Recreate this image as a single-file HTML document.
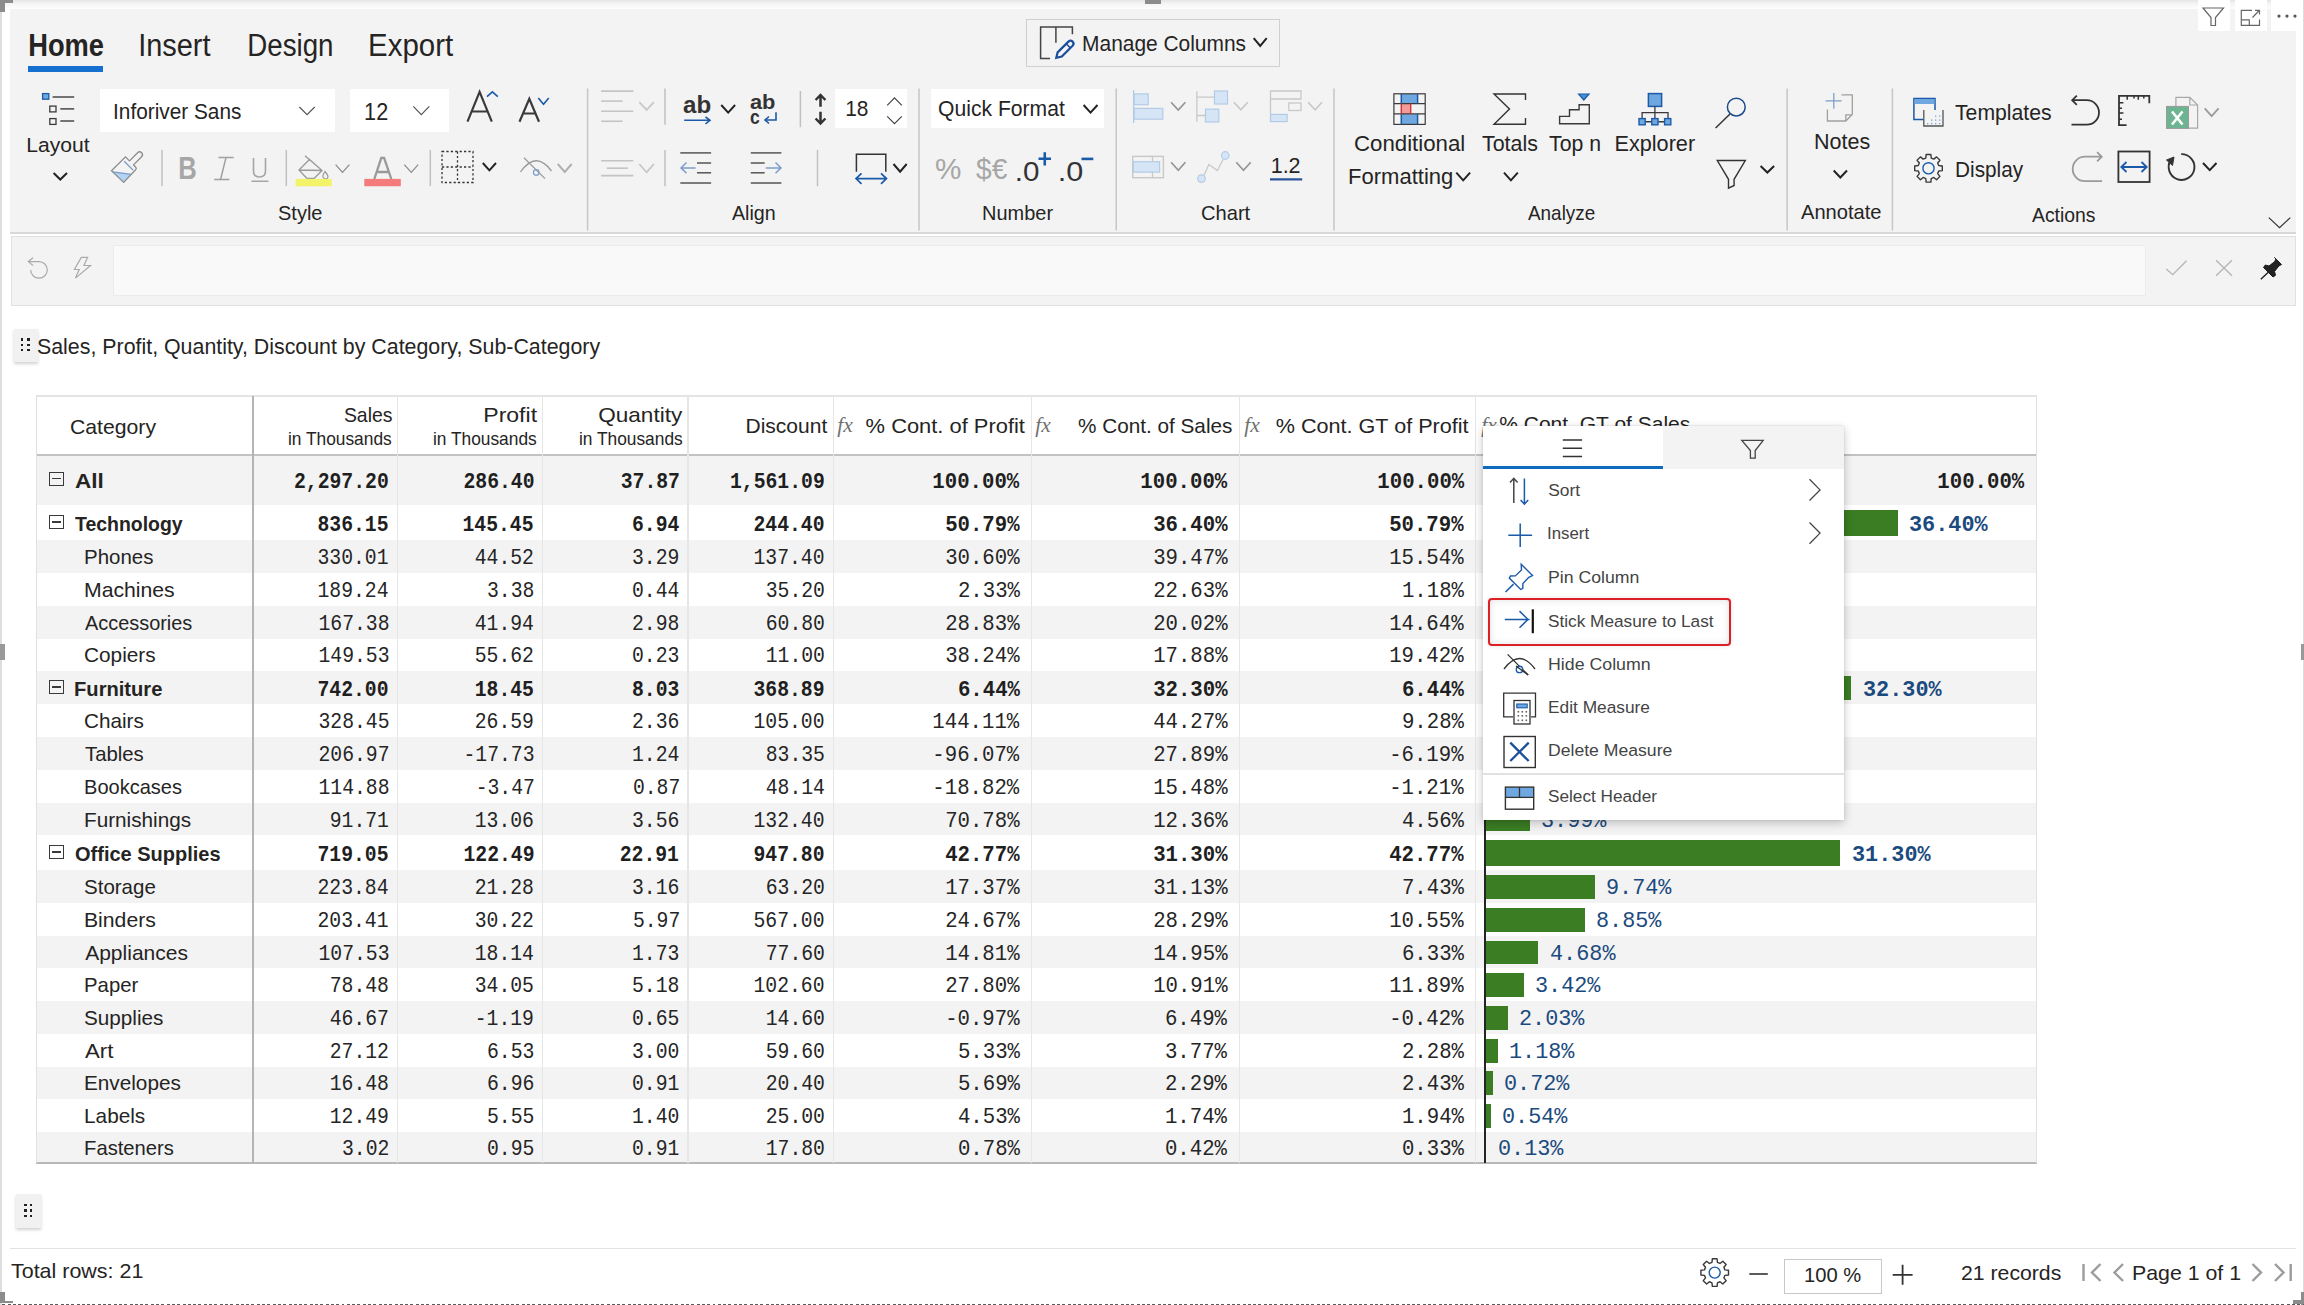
<!DOCTYPE html>
<html><head><meta charset="utf-8"><style>
html,body{margin:0;padding:0;}
body{width:2304px;height:1305px;position:relative;overflow:hidden;background:#fff;font-family:'Liberation Sans', sans-serif;}
.t{position:absolute;white-space:nowrap;line-height:1;}
svg{display:block}
</style></head><body>
<div style="position:absolute;left:0px;top:0px;width:2304px;height:10px;background:linear-gradient(#e4e4e4,#f4f4f4 35%,#fff)"></div><div style="position:absolute;left:0px;top:0px;width:1.9px;height:1305px;background:#dedede"></div><div style="position:absolute;left:2302.8px;top:0px;width:1.2px;height:1305px;background:#dcdcdc"></div><div style="position:absolute;left:2301px;top:1292.4px;width:3px;height:12.6px;background:#8c8c8c"></div><div style="position:absolute;left:2292.8px;top:1300.3px;width:11.2px;height:3.3px;background:#8c8c8c"></div><div style="position:absolute;left:0px;top:0px;width:13px;height:2.6px;background:#8c8c8c"></div><div style="position:absolute;left:0px;top:0px;width:4.8px;height:11.5px;background:#8c8c8c"></div><div style="position:absolute;left:1145px;top:0px;width:16px;height:3.5px;background:#8c8c8c"></div><div style="position:absolute;left:0px;top:1303.8px;width:2304px;height:1.2px;background:repeating-linear-gradient(90deg,transparent 0 2.3px,#5a5a5a 2.3px 5.3px)"></div><div style="position:absolute;left:0px;top:1292.2px;width:4.7px;height:11.3px;background:#8c8c8c"></div><div style="position:absolute;left:0px;top:644.1px;width:4.8px;height:15.6px;background:#999"></div><div style="position:absolute;left:2300.8px;top:644.1px;width:3.2px;height:15.6px;background:#999"></div><div style="position:absolute;left:0px;top:1300.6px;width:13px;height:2.8px;background:#8c8c8c"></div><div style="position:absolute;left:10px;top:9px;width:2286px;height:223px;background:#f3f3f3"></div><div style="position:absolute;left:10px;top:232.2px;width:2286px;height:2px;background:#d8d8d8"></div><div style="position:absolute;left:2198px;top:0px;width:32px;height:31px;background:#fff"></div><div style="position:absolute;left:2235px;top:0px;width:32px;height:31px;background:#fff"></div><div style="position:absolute;left:2271px;top:0px;width:31.5px;height:31px;background:#fff"></div><div style="position:absolute;left:10.5px;top:235.8px;width:2285.2px;height:69.8px;background:#f3f3f3;border:1.3px solid #e0e0e0;box-sizing:border-box"></div><div style="position:absolute;left:113px;top:245px;width:2033px;height:51px;background:#f9f9f9;border:1px solid #ececec;box-sizing:border-box"></div><div style="position:absolute;left:99.9px;top:88.6px;width:235.4px;height:43.1px;background:#fff"></div><div style="position:absolute;left:350.1px;top:88.6px;width:99.1px;height:43.1px;background:#fff"></div><div style="position:absolute;left:835.1px;top:88.6px;width:72.3px;height:39.3px;background:#fff"></div><div style="position:absolute;left:930.6px;top:88.6px;width:173.8px;height:39.3px;background:#fff"></div><div style="position:absolute;left:1026.4px;top:18.75px;width:253.4px;height:48.35px;border:1.2px solid #d0d0d0;box-sizing:border-box"></div><div class="t" style="left:28.0px;transform-origin:2.0px 25px;top:31px;font-size:30.81px;color:#252423;font-weight:bold;font-family:'Liberation Sans', sans-serif;transform:scaleX(0.8857);">Home</div><div class="t" style="left:138.03px;transform-origin:2.77px 25px;top:31px;font-size:30.81px;color:#252423;font-weight:normal;font-family:'Liberation Sans', sans-serif;transform:scaleX(0.9393);">Insert</div><div class="t" style="left:247.34px;transform-origin:2.46px 25px;top:31px;font-size:30.81px;color:#252423;font-weight:normal;font-family:'Liberation Sans', sans-serif;transform:scaleX(0.8998);">Design</div><div class="t" style="left:368.14px;transform-origin:2.46px 25px;top:31px;font-size:30.81px;color:#252423;font-weight:normal;font-family:'Liberation Sans', sans-serif;transform:scaleX(0.9552);">Export</div><div style="position:absolute;left:28.2px;top:66.3px;width:75.2px;height:5.4px;background:#1570cf"></div><div class="t" style="left:26.31px;transform-origin:1.69px 18px;top:134px;font-size:21.08px;color:#252423;font-weight:normal;font-family:'Liberation Sans', sans-serif;">Layout</div><div class="t" style="left:113.15px;transform-origin:1.95px 18px;top:101px;font-size:21.66px;color:#252423;font-weight:normal;font-family:'Liberation Sans', sans-serif;transform:scaleX(0.9600);">Inforiver Sans</div><div class="t" style="left:363.66px;transform-origin:1.74px 19px;top:101px;font-size:23.26px;color:#252423;font-weight:normal;font-family:'Liberation Sans', sans-serif;transform:scaleX(0.9297);">12</div><div class="t" style="left:278.06px;transform-origin:0.94px 17px;top:203px;font-size:20.78px;color:#252423;font-weight:normal;font-family:'Liberation Sans', sans-serif;transform:scaleX(0.9625);">Style</div><div class="t" style="left:732.3px;transform-origin:0.0px 17px;top:203px;font-size:20.78px;color:#252423;font-weight:normal;font-family:'Liberation Sans', sans-serif;transform:scaleX(0.9469);">Align</div><div class="t" style="left:981.94px;transform-origin:1.66px 17px;top:203px;font-size:20.78px;color:#252423;font-weight:normal;font-family:'Liberation Sans', sans-serif;transform:scaleX(0.9611);">Number</div><div class="t" style="left:1200.56px;transform-origin:1.04px 17px;top:203px;font-size:20.78px;color:#252423;font-weight:normal;font-family:'Liberation Sans', sans-serif;transform:scaleX(0.9685);">Chart</div><div class="t" style="left:1528.4px;transform-origin:0.0px 17px;top:203px;font-size:20.78px;color:#252423;font-weight:normal;font-family:'Liberation Sans', sans-serif;transform:scaleX(0.9104);">Analyze</div><div class="t" style="left:1801.0px;transform-origin:0.0px 17px;top:202px;font-size:20.49px;color:#252423;font-weight:normal;font-family:'Liberation Sans', sans-serif;transform:scaleX(0.9810);">Annotate</div><div class="t" style="left:2031.6px;transform-origin:0.0px 17px;top:205px;font-size:20.78px;color:#252423;font-weight:normal;font-family:'Liberation Sans', sans-serif;transform:scaleX(0.9328);">Actions</div><div class="t" style="left:845.3px;transform-origin:1.7px 19px;top:97px;font-size:22.67px;color:#252423;font-weight:normal;font-family:'Liberation Sans', sans-serif;transform:scaleX(0.9221);">18</div><div class="t" style="left:938.18px;transform-origin:1.02px 19px;top:97px;font-size:22.67px;color:#252423;font-weight:normal;font-family:'Liberation Sans', sans-serif;transform:scaleX(0.9319);">Quick Format</div><div class="t" style="left:1081.76px;transform-origin:1.74px 18px;top:33px;font-size:21.8px;color:#252423;font-weight:normal;font-family:'Liberation Sans', sans-serif;transform:scaleX(0.9596);">Manage Columns</div><div class="t" style="left:1354.22px;transform-origin:1.08px 18px;top:133px;font-size:21.58px;color:#252423;font-weight:normal;font-family:'Liberation Sans', sans-serif;transform:scaleX(1.0311);">Conditional</div><div class="t" style="left:1347.82px;transform-origin:1.78px 18px;top:166px;font-size:22.24px;color:#252423;font-weight:normal;font-family:'Liberation Sans', sans-serif;transform:scaleX(0.9905);">Formatting</div><div class="t" style="left:1481.87px;transform-origin:0.43px 18px;top:133px;font-size:21.58px;color:#252423;font-weight:normal;font-family:'Liberation Sans', sans-serif;transform:scaleX(0.9921);">Totals</div><div class="t" style="left:1548.55px;transform-origin:0.45px 18px;top:133px;font-size:22.38px;color:#252423;font-weight:normal;font-family:'Liberation Sans', sans-serif;transform:scaleX(0.9505);">Top n</div><div class="t" style="left:1614.47px;transform-origin:1.73px 18px;top:133px;font-size:21.66px;color:#252423;font-weight:normal;font-family:'Liberation Sans', sans-serif;">Explorer</div><div class="t" style="left:1813.99px;transform-origin:1.71px 17px;top:132px;font-size:21.37px;color:#252423;font-weight:normal;font-family:'Liberation Sans', sans-serif;transform:scaleX(1.0072);">Notes</div><div class="t" style="left:1955.25px;transform-origin:0.45px 18px;top:102px;font-size:22.38px;color:#252423;font-weight:normal;font-family:'Liberation Sans', sans-serif;transform:scaleX(0.9472);">Templates</div><div class="t" style="left:1954.72px;transform-origin:1.78px 18px;top:159px;font-size:22.24px;color:#252423;font-weight:normal;font-family:'Liberation Sans', sans-serif;transform:scaleX(0.9330);">Display</div><div class="t" style="left:1270.69px;transform-origin:1.61px 17px;top:156px;font-size:21.51px;color:#252423;font-weight:normal;font-family:'Liberation Sans', sans-serif;">1.2</div><div class="t" style="left:177.68px;transform-origin:2.02px 26px;top:153px;font-size:31px;color:#a6a6a6;font-weight:bold;font-family:'Liberation Sans', sans-serif;transform:scaleX(0.8250);">B</div><div class="t" style="left:683.02px;transform-origin:0.74px 20px;top:93px;font-size:24.5px;color:#333;font-weight:bold;font-family:'Liberation Sans', sans-serif;transform:scaleX(0.9841);">ab</div><div class="t" style="left:750.21px;transform-origin:0.58px 16px;top:93px;font-size:19.5px;color:#333;font-weight:bold;font-family:'Liberation Sans', sans-serif;transform:scaleX(1.1193);">ab</div><div class="t" style="left:750.02px;transform-origin:0.78px 16px;top:108px;font-size:19.5px;color:#333;font-weight:bold;font-family:'Liberation Sans', sans-serif;transform:scaleX(0.8988);">c</div><div class="t" style="left:935.35px;transform-origin:1.05px 25px;top:154px;font-size:30px;color:#a6a6a6;font-weight:normal;font-family:'Liberation Sans', sans-serif;transform:scaleX(0.9878);">%</div><div class="t" style="left:976.4px;transform-origin:0.3px 25px;top:154px;font-size:30px;color:#a6a6a6;font-weight:normal;font-family:'Liberation Sans', sans-serif;transform:scaleX(0.9370);">$€</div><div class="t" style="left:1014.98px;transform-origin:2.52px 23px;top:158px;font-size:28px;color:#333;font-weight:normal;font-family:'Liberation Sans', sans-serif;transform:scaleX(1.0563);">.0</div><div class="t" style="left:1057.98px;transform-origin:2.52px 23px;top:158px;font-size:28px;color:#333;font-weight:normal;font-family:'Liberation Sans', sans-serif;transform:scaleX(1.0915);">.0</div><svg style="position:absolute;left:0;top:0;overflow:visible" width="2304" height="320" viewBox="0 0 2304 320"><line x1="587.6" y1="88.5" x2="587.6" y2="230.5" stroke="#c6c6c6" stroke-width="1.5" stroke-linecap="butt"/><line x1="919" y1="88.5" x2="919" y2="230.5" stroke="#c6c6c6" stroke-width="1.5" stroke-linecap="butt"/><line x1="1116.25" y1="88.5" x2="1116.25" y2="230.5" stroke="#c6c6c6" stroke-width="1.5" stroke-linecap="butt"/><line x1="1334" y1="88.5" x2="1334" y2="230.5" stroke="#c6c6c6" stroke-width="1.5" stroke-linecap="butt"/><line x1="1787.1" y1="88.5" x2="1787.1" y2="230.5" stroke="#c6c6c6" stroke-width="1.5" stroke-linecap="butt"/><line x1="1892.4" y1="88.5" x2="1892.4" y2="230.5" stroke="#c6c6c6" stroke-width="1.5" stroke-linecap="butt"/><line x1="162" y1="150" x2="162" y2="186" stroke="#c0c0c0" stroke-width="1.5" stroke-linecap="butt"/><line x1="286.3" y1="150" x2="286.3" y2="186" stroke="#c0c0c0" stroke-width="1.5" stroke-linecap="butt"/><line x1="430.3" y1="150" x2="430.3" y2="186" stroke="#c0c0c0" stroke-width="1.5" stroke-linecap="butt"/><line x1="665" y1="88.6" x2="665" y2="124.7" stroke="#c0c0c0" stroke-width="1.5" stroke-linecap="butt"/><line x1="800.4" y1="91" x2="800.4" y2="127.2" stroke="#c0c0c0" stroke-width="1.5" stroke-linecap="butt"/><line x1="665" y1="150.1" x2="665" y2="186.25" stroke="#c0c0c0" stroke-width="1.5" stroke-linecap="butt"/><line x1="817.5" y1="150" x2="817.5" y2="186.25" stroke="#c0c0c0" stroke-width="1.5" stroke-linecap="butt"/><rect x="42.6" y="93.6" width="6.2" height="5.6" fill="#6fa8e0" stroke="#1a5aa8" stroke-width="1.3" /><line x1="52.6" y1="97" x2="74.2" y2="97" stroke="#3b3b3b" stroke-width="1.4" stroke-linecap="butt"/><rect x="49.8" y="106.1" width="6.2" height="5.8" fill="none" stroke="#3b3b3b" stroke-width="1.3" /><line x1="60.3" y1="108.9" x2="74.2" y2="108.9" stroke="#3b3b3b" stroke-width="1.4" stroke-linecap="butt"/><rect x="49.8" y="118.6" width="6.2" height="5.8" fill="none" stroke="#3b3b3b" stroke-width="1.3" /><line x1="60.3" y1="121" x2="74.2" y2="121" stroke="#3b3b3b" stroke-width="1.4" stroke-linecap="butt"/><polyline points="53.6,173 60.3,179.5 67,173" fill="none" stroke="#222" stroke-width="2"/><polyline points="299.4,107 307.04999999999995,114.7 314.7,107" fill="none" stroke="#555" stroke-width="1.2"/><polyline points="413.3,106.4 421.3,114.7 429.3,106.4" fill="none" stroke="#555" stroke-width="1.2"/><path d="M467.5,121.7 L479.6,91.8 L491.8,121.7 M471.8,111.5 L487.4,111.5" fill="none" stroke="#3a3a3a" stroke-width="2.2" /><polyline points="487,96.7 492.4,91.8 497.8,96.7" fill="none" stroke="#1a5aa8" stroke-width="1.6"/><path d="M519.5,121.7 L529.3,98.75 L539,121.7 M523,113.5 L535.6,113.5" fill="none" stroke="#3a3a3a" stroke-width="2.2" /><polyline points="538.3,98 543.525,104.3 548.75,98" fill="none" stroke="#1a5aa8" stroke-width="1.6"/><path d="M112.6,171.8 L131.3,174.3 L123.7,182.2 Z" fill="#b3d3f2" stroke="none" stroke-width="0" /><path d="M111.5,170.7 L125.5,156.9 L129.5,160.9 L137.6,152.8 Q139.6,150.8 141.6,152.8 Q143.6,154.8 141.6,156.8 L133.5,164.9 L135.6,167 Q137,168.4 135.6,169.8 L123.7,182.4 Z" fill="none" stroke="#8c8c8c" stroke-width="1.3" /><path d="M112.6,171.8 L131.3,174.3 M124.2,161.2 L133,170" fill="none" stroke="#7a9cc6" stroke-width="1.3" /><path d="M218.5,157.4 L233.7,157.4 M214.2,179.4 L229.4,179.4 M226,157.6 L220.6,179.2" fill="none" stroke="#a0a0a0" stroke-width="1.5" /><path d="M253.5,158 L253.5,171 Q253.5,177 259.5,177 Q265.5,177 265.5,171 L265.5,158 M251.5,181.3 L268.5,181.3" fill="none" stroke="#a6a6a6" stroke-width="1.6" /><path d="M305,155.7 L311,161 M299,170 L309.5,159.5 L322,170.5 L314,178.5 L307,178.5 Z M299,170 L322,170.5" fill="none" stroke="#9a9a9a" stroke-width="1.3" /><path d="M325,171.5 Q322.5,175 323,177 Q324,179 325.5,179 Q327.5,179 328,177 Q328,175 325,171.5 Z" fill="none" stroke="#9a9a9a" stroke-width="1.2" /><rect x="295.6" y="178.9" width="36.1" height="7.35" fill="#f3f36a" stroke="none" stroke-width="0" /><polyline points="335.6,164.7 342.5,172.4 349.4,164.7" fill="none" stroke="#8a8a8a" stroke-width="1.2"/><path d="M374.3,179 L381.3,157.8 L384.1,157.8 L391.3,179 M377.6,172 L388.2,172" fill="none" stroke="#999999" stroke-width="2.3" /><rect x="364.3" y="178.9" width="36.5" height="7.35" fill="#f37b7b" stroke="none" stroke-width="0" /><polyline points="404.3,164.7 411.25,172.4 418.2,164.7" fill="none" stroke="#8a8a8a" stroke-width="1.2"/><rect x="442" y="151.5" width="31" height="31" fill="none" stroke="#333" stroke-width="1.3" stroke-dasharray="2.2 2.2"/><line x1="457.5" y1="151.5" x2="457.5" y2="182.5" stroke="#333" stroke-width="1.3" stroke-linecap="butt" stroke-dasharray="2.2 2.2"/><line x1="442" y1="167" x2="473" y2="167" stroke="#333" stroke-width="1.3" stroke-linecap="butt" stroke-dasharray="2.2 2.2"/><polyline points="482.8,163 489.4,170.3 496,163" fill="none" stroke="#222" stroke-width="2"/><path d="M520.5,172 Q536,150 551.5,171" fill="none" stroke="#9a9a9a" stroke-width="1.3" /><line x1="524" y1="157.8" x2="545" y2="178.6" stroke="#9a9a9a" stroke-width="1.3" stroke-linecap="butt"/><circle cx="536.25" cy="172.4" r="2.8" fill="none" stroke="#7a9cc6" stroke-width="1.2"/><polyline points="557.8,164 564.75,172 571.7,164" fill="none" stroke="#b0b0b0" stroke-width="2"/><line x1="601.1" y1="91.1" x2="633.3" y2="91.1" stroke="#c4c4c4" stroke-width="1.6" stroke-linecap="butt"/><line x1="601.1" y1="101.1" x2="622.6" y2="101.1" stroke="#c4c4c4" stroke-width="1.6" stroke-linecap="butt"/><line x1="601.1" y1="111.25" x2="633.3" y2="111.25" stroke="#c4c4c4" stroke-width="1.6" stroke-linecap="butt"/><line x1="601.1" y1="121.25" x2="622.6" y2="121.25" stroke="#c4c4c4" stroke-width="1.6" stroke-linecap="butt"/><polyline points="639.3,102.2 646.5999999999999,109.9 653.9,102.2" fill="none" stroke="#c8c8c8" stroke-width="1.8"/><line x1="601.1" y1="160.8" x2="633.3" y2="160.8" stroke="#c4c4c4" stroke-width="1.6" stroke-linecap="butt"/><line x1="606.7" y1="168.2" x2="627.8" y2="168.2" stroke="#c4c4c4" stroke-width="1.6" stroke-linecap="butt"/><line x1="601.1" y1="175.6" x2="633.3" y2="175.6" stroke="#c4c4c4" stroke-width="1.6" stroke-linecap="butt"/><polyline points="639.3,164 646.5999999999999,172.4 653.9,164" fill="none" stroke="#c8c8c8" stroke-width="1.8"/><path d="M684.2,120.3 L710,120.3 M705.5,116.8 L710,120.3 L705.5,123.8" fill="none" stroke="#1a5aa8" stroke-width="1.6" /><polyline points="721.25,105 728.175,112.6 735.1,105" fill="none" stroke="#222" stroke-width="2"/><path d="M776,112.2 L776,120 L765,120 M769,116.5 L765,120 L769,123.5" fill="none" stroke="#1a5aa8" stroke-width="1.6" /><path d="M820.5,95 L820.5,106.8 M815.6,100 L820.5,95 L825.4,100 M820.5,111.8 L820.5,123.5 M815.6,118.5 L820.5,123.5 L825.4,118.5" fill="none" stroke="#333" stroke-width="2.5" /><polyline points="887.2,105.3 894.5,97.8 901.8,105.3" fill="none" stroke="#444" stroke-width="1.2"/><polyline points="887.2,116.4 894.5,123.75 901.8,116.4" fill="none" stroke="#444" stroke-width="1.2"/><line x1="680.3" y1="152.9" x2="711.1" y2="152.9" stroke="#555" stroke-width="1.5" stroke-linecap="butt"/><line x1="697" y1="163" x2="711.1" y2="163" stroke="#555" stroke-width="1.5" stroke-linecap="butt"/><line x1="697" y1="172.8" x2="711.1" y2="172.8" stroke="#555" stroke-width="1.5" stroke-linecap="butt"/><line x1="680.3" y1="183" x2="711.1" y2="183" stroke="#555" stroke-width="1.5" stroke-linecap="butt"/><path d="M681,167.9 L695.6,167.9 M686.5,162.5 L681,167.9 L686.5,173.3" fill="none" stroke="#7e9fc9" stroke-width="1.5" /><line x1="750.8" y1="152.9" x2="781.4" y2="152.9" stroke="#555" stroke-width="1.5" stroke-linecap="butt"/><line x1="750.8" y1="163" x2="764.7" y2="163" stroke="#555" stroke-width="1.5" stroke-linecap="butt"/><line x1="750.8" y1="172.8" x2="764.7" y2="172.8" stroke="#555" stroke-width="1.5" stroke-linecap="butt"/><line x1="750.8" y1="183" x2="781.4" y2="183" stroke="#555" stroke-width="1.5" stroke-linecap="butt"/><path d="M765.7,167.9 L781,167.9 M775.5,162.5 L781,167.9 L775.5,173.3" fill="none" stroke="#7e9fc9" stroke-width="1.5" /><path d="M856.4,171.7 L856.4,154.3 L885.8,154.3 L885.8,171.7" fill="none" stroke="#333" stroke-width="1.5" /><path d="M856,178.6 L886.5,178.6 M861.5,173.3 L856,178.6 L861.5,183.9 M881,173.3 L886.5,178.6 L881,183.9" fill="none" stroke="#1a5aa8" stroke-width="1.7" /><polyline points="893.5,164 900.1,171.7 906.7,164" fill="none" stroke="#222" stroke-width="2"/><polyline points="1083.6,105 1090.55,112.6 1097.5,105" fill="none" stroke="#222" stroke-width="2"/><path d="M1038.5,158.8 L1051,158.8 M1044.75,152.2 L1044.75,165.4" fill="none" stroke="#1a5aa8" stroke-width="2.6" /><line x1="1081.5" y1="158.9" x2="1093.3" y2="158.9" stroke="#1a5aa8" stroke-width="2.6" stroke-linecap="butt"/><line x1="1133.6" y1="90" x2="1133.6" y2="123" stroke="#b3cbe6" stroke-width="1.3" stroke-linecap="butt"/><rect x="1134.2" y="93.9" width="14" height="10.8" fill="#d5e5f6" stroke="#b3cbe6" stroke-width="1.2" /><rect x="1134.2" y="108.4" width="28.6" height="10.8" fill="#d5e5f6" stroke="#b3cbe6" stroke-width="1.2" /><polyline points="1171.1,102.2 1178.25,110.1 1185.4,102.2" fill="none" stroke="#959595" stroke-width="1.7"/><path d="M1196.9,91.3 L1196.9,121.8 M1196.9,97.2 L1214,97.2 M1196.9,115.5 L1205,115.5" fill="none" stroke="#c8c8c8" stroke-width="1.3" /><rect x="1214.5" y="91" width="13" height="13" fill="#d5e5f6" stroke="#b3cbe6" stroke-width="1.2" /><rect x="1205.5" y="109.2" width="13.3" height="12.8" fill="#d5e5f6" stroke="#b3cbe6" stroke-width="1.2" /><polyline points="1233.9,102.2 1240.85,109.8 1247.8,102.2" fill="none" stroke="#c8c8c8" stroke-width="1.7"/><path d="M1270.5,122 L1270.5,91 L1301,91 L1301,99 L1270.5,99" fill="none" stroke="#c8c8c8" stroke-width="1.3" /><rect x="1288.8" y="103" width="12.2" height="7.5" fill="none" stroke="#c8c8c8" stroke-width="1.3" /><rect x="1270.6" y="114.4" width="16.5" height="7.2" fill="#d5e5f6" stroke="#b3cbe6" stroke-width="1.2" /><polyline points="1308.2,102.2 1315.1,109.8 1322,102.2" fill="none" stroke="#c8c8c8" stroke-width="1.7"/><rect x="1132.7" y="156.4" width="30.7" height="21.3" fill="none" stroke="#c8c8c8" stroke-width="1.4" /><rect x="1133.4" y="161.7" width="26.2" height="10.4" fill="#d5e5f6" stroke="#b3cbe6" stroke-width="1.2" /><path d="M1152.5,156.4 L1152.5,161.7 M1152.5,172.1 L1152.5,177.7" fill="none" stroke="#c8c8c8" stroke-width="1.3" /><polyline points="1171.1,162.3 1178.25,170.3 1185.4,162.3" fill="none" stroke="#959595" stroke-width="1.7"/><path d="M1204,175.5 L1208.8,164.5 L1217.4,170.5 L1223.2,159.3" fill="none" stroke="#c8c8c8" stroke-width="1.2" /><circle cx="1201.5" cy="178.6" r="3.8" fill="#d5e5f6" stroke="#b3cbe6" stroke-width="1.2"/><circle cx="1225.3" cy="155.5" r="3.8" fill="#d5e5f6" stroke="#b3cbe6" stroke-width="1.2"/><polyline points="1236.3,162.3 1243.5,170.3 1250.7,162.3" fill="none" stroke="#959595" stroke-width="1.7"/><line x1="1270" y1="179.3" x2="1302.2" y2="179.3" stroke="#2a5597" stroke-width="2.2" stroke-linecap="butt"/><rect x="1401.3" y="93.9" width="16" height="10" fill="#6fa8e0" stroke="none" stroke-width="0" /><rect x="1401.3" y="114.2" width="16" height="10.3" fill="#6fa8e0" stroke="none" stroke-width="0" /><rect x="1401.3" y="103.9" width="9.3" height="10.3" fill="#f49a9a" stroke="none" stroke-width="0" /><rect x="1393.9" y="93.8" width="31.3" height="30.6" fill="none" stroke="#3a3a3a" stroke-width="1.2" /><path d="M1393.9,103.6 L1425.2,103.6 M1393.9,113.9 L1425.2,113.9" fill="none" stroke="#3a3a3a" stroke-width="1.2" /><path d="M1401.3,93.8 L1401.3,103.6 M1417.6,93.8 L1417.6,103.6 M1401.3,113.9 L1401.3,124.4 M1417.6,113.9 L1417.6,124.4" fill="none" stroke="#1a5aa8" stroke-width="1.5" /><path d="M1401.3,103.6 L1401.3,113.9 M1410.7,103.6 L1410.7,113.9" fill="none" stroke="#cc3333" stroke-width="1.4" /><polyline points="1456.3,172.6 1463.1999999999998,180.3 1470.1,172.6" fill="none" stroke="#222" stroke-width="2"/><path d="M1525.5,100 L1525.5,94 L1494,94 L1509.5,109.1 L1494,124.2 L1525.5,124.2 L1525.5,118" fill="none" stroke="#333" stroke-width="1.4" /><polyline points="1504,172.6 1510.9,180.3 1517.8,172.6" fill="none" stroke="#222" stroke-width="2"/><path d="M1559.6,123.8 L1559.6,116.4 L1569.5,116.4 L1569.5,109.8 L1579.1,109.8 L1579.1,104.8 L1589.3,104.8 L1589.3,123.8 Z" fill="none" stroke="#3a3a3a" stroke-width="1.4" /><path d="M1578.6,94 L1589,94 L1583.8,100 Z" fill="#4a8fd8" stroke="#1a5aa8" stroke-width="1.2" /><rect x="1648.4" y="93.6" width="13.2" height="12.8" fill="#6fa8e0" stroke="#1a5aa8" stroke-width="1.5" /><path d="M1654.9,106.4 L1654.9,118.5 M1642.1,118.5 L1642.1,112.7 L1668,112.7 L1668,118.5 M1645.5,121.75 L1651.5,121.75 M1658.3,121.75 L1664.2,121.75" fill="none" stroke="#3a3a3a" stroke-width="1.3" /><rect x="1639.0" y="118.6" width="6.2" height="6.2" fill="#6fa8e0" stroke="#1a5aa8" stroke-width="1.4" /><rect x="1651.8000000000002" y="118.6" width="6.2" height="6.2" fill="#6fa8e0" stroke="#1a5aa8" stroke-width="1.4" /><rect x="1664.6000000000001" y="118.6" width="6.2" height="6.2" fill="#6fa8e0" stroke="#1a5aa8" stroke-width="1.4" /><circle cx="1736.3" cy="107.1" r="8.9" fill="none" stroke="#1a4a8a" stroke-width="1.5"/><line x1="1730" y1="114" x2="1715.6" y2="128" stroke="#333" stroke-width="1.5" stroke-linecap="butt"/><path d="M1717.3,160.5 L1745.3,160.5 L1734.1,179.3 L1734.1,185.5 L1728.5,188.2 L1728.5,179.3 Z" fill="none" stroke="#333" stroke-width="1.4" /><polyline points="1760.6,166 1767.35,172.5 1774.1,166" fill="none" stroke="#222" stroke-width="2"/><path d="M1825.5,100.8 L1841.5,100.8 M1833.8,92.9 L1833.8,108.8" fill="none" stroke="#7e9fc9" stroke-width="1.3" /><path d="M1841.5,94.8 L1852.3,94.8 L1852.3,114.5 L1845.8,121 L1827.4,121 L1827.4,109.4 M1845.8,121 L1845.8,114.9 L1852.3,114.9" fill="none" stroke="#a0a0a0" stroke-width="1.3" /><polyline points="1833.7,170.5 1840.35,177.5 1847,170.5" fill="none" stroke="#222" stroke-width="2"/><path d="M1923.6,119.4 L1913.9,119.4 L1913.9,98.4 L1935,98.4 L1935,110" fill="none" stroke="#1a5aa8" stroke-width="1.5" /><rect x="1914.6" y="99" width="19.8" height="5" fill="#6fa8e0" stroke="none" stroke-width="0" /><path d="M1923.8,110 L1923.8,126 L1943,126 L1943,110" fill="none" stroke="#555" stroke-width="1.3" /><rect x="1935" y="115.5" width="1.3" height="1.3" fill="#7ea6d6" stroke="none" stroke-width="0" /><rect x="1939" y="115.5" width="1.3" height="1.3" fill="#7ea6d6" stroke="none" stroke-width="0" /><rect x="1931" y="119.5" width="1.3" height="1.3" fill="#7ea6d6" stroke="none" stroke-width="0" /><rect x="1935" y="119.5" width="1.3" height="1.3" fill="#7ea6d6" stroke="none" stroke-width="0" /><rect x="1939" y="119.5" width="1.3" height="1.3" fill="#7ea6d6" stroke="none" stroke-width="0" /><rect x="1927" y="123" width="1.3" height="1.3" fill="#7ea6d6" stroke="none" stroke-width="0" /><rect x="1931" y="123" width="1.3" height="1.3" fill="#7ea6d6" stroke="none" stroke-width="0" /><rect x="1935" y="123" width="1.3" height="1.3" fill="#7ea6d6" stroke="none" stroke-width="0" /><rect x="1939" y="123" width="1.3" height="1.3" fill="#7ea6d6" stroke="none" stroke-width="0" /><polygon points="1926.13,154.50 1930.87,154.50 1931.23,158.06 1933.82,159.13 1936.58,156.87 1939.93,160.22 1937.67,162.98 1938.74,165.57 1942.30,165.93 1942.30,170.67 1938.74,171.03 1937.67,173.62 1939.93,176.38 1936.58,179.73 1933.82,177.47 1931.23,178.54 1930.87,182.10 1926.13,182.10 1925.77,178.54 1923.18,177.47 1920.42,179.73 1917.07,176.38 1919.33,173.62 1918.26,171.03 1914.70,170.67 1914.70,165.93 1918.26,165.57 1919.33,162.98 1917.07,160.22 1920.42,156.87 1923.18,159.13 1925.77,158.06" fill="none" stroke="#3a3a3a" stroke-width="1.4" stroke-linejoin="round"/><circle cx="1928.5" cy="168.3" r="5.6" fill="none" stroke="#1a5aa8" stroke-width="1.4"/><path d="M2072.7,100.2 L2086.8,100.2 A12.2,12.2 0 0 1 2086.8,124.6 L2071.5,124.6 M2076.8,95.6 L2072.2,100.2 L2076.8,104.8" fill="none" stroke="#333" stroke-width="1.8" /><path d="M2102.1,181.1 L2084.9,181.1 A12.2,12.2 0 0 1 2084.9,156.7 L2101.5,156.7 M2097.1,152.1 L2101.7,156.7 L2097.1,161.3" fill="none" stroke="#9a9a9a" stroke-width="1.8" /><path d="M2126.6,125.1 L2119,125.1 L2119,95.9 L2149.3,95.9 L2149.3,103.3" fill="none" stroke="#333" stroke-width="1.8" /><path d="M2127.2,95.9 L2127.2,99.8 M2134,95.9 L2134,98.6 M2138.3,95.9 L2138.3,99.8 M2143.8,95.9 L2143.8,98.6 M2119,102.7 L2123.4,102.7 M2119,108.2 L2122,108.2 M2119,113.1 L2123.4,113.1 M2119,119.2 L2122,119.2" fill="none" stroke="#333" stroke-width="1.5" /><rect x="2118.4" y="151.5" width="31.2" height="30.5" fill="none" stroke="#333" stroke-width="1.8" /><path d="M2121.3,167 L2146.7,167 M2126.5,162 L2121.3,167 L2126.5,172 M2141.5,162 L2146.7,167 L2141.5,172" fill="none" stroke="#1a5aa8" stroke-width="1.8" /><path d="M2175.9,106.4 L2175.9,97.4 L2189.8,97.4 L2197.6,105 L2197.6,128.2 L2188.5,128.2 M2189.8,97.4 L2189.8,105 L2197.6,105" fill="none" stroke="#a8a8a8" stroke-width="1.2" /><rect x="2166.5" y="106.4" width="22" height="22" fill="#6db592" stroke="#9a9a9a" stroke-width="1" /><path d="M2172,111.5 L2182.5,124.5 M2182.5,111.5 L2172,124.5" fill="none" stroke="#ffffff" stroke-width="2.6" /><polyline points="2204.7,108.4 2211.6499999999996,116.2 2218.6,108.4" fill="none" stroke="#9a9a9a" stroke-width="1.8"/><path d="M2170.6,160.2 A12.9,12.9 0 1 0 2181.2,154.1" fill="none" stroke="#333" stroke-width="1.9" /><path d="M2166.5,160 L2174,157 L2172.5,165.5 Z" fill="#333" stroke="#333" stroke-width="1" /><polyline points="2203,163 2209.75,170.1 2216.5,163" fill="none" stroke="#222" stroke-width="2"/><polyline points="2268.8,217.6 2279.55,227.7 2290.3,217.6" fill="none" stroke="#333" stroke-width="1.2"/><path d="M1050.1,58.4 L1040.6,58.4 L1040.6,26.9 L1072.4,26.9 L1072.4,34.3 M1055.9,26.9 L1055.9,42.8" fill="none" stroke="#444" stroke-width="1.5" /><path d="M1056.3,57.8 L1057.6,52.4 L1068.4,41.6 Q1070.6,39.6 1072.6,41.6 Q1074.6,43.6 1072.6,45.8 L1061.8,56.6 Z" fill="none" stroke="#1a4f9c" stroke-width="2.2" /><line x1="1066.2" y1="43.8" x2="1070.4" y2="48" stroke="#1a4f9c" stroke-width="1.6" stroke-linecap="butt"/><polyline points="1253.7,38.2 1260.2,45.85 1266.7,38.2" fill="none" stroke="#222" stroke-width="2"/><path d="M2203,8 L2223.5,8 L2215.5,17.5 L2215.5,25.5 L2211,25.5 L2211,17.5 Z" fill="none" stroke="#666" stroke-width="1.2" /><path d="M2252,10.3 L2241.3,10.3 L2241.3,25.4 L2259.5,25.4 L2259.5,19.4 M2241.3,19.8 L2249.3,19.8 L2249.3,25.4 M2252.5,17.5 L2259.2,10.5 M2255,10.3 L2259.5,10.3 L2259.5,14.6" fill="none" stroke="#666" stroke-width="1.2" /><circle cx="2279" cy="16.1" r="1.6" fill="#555"/><circle cx="2287" cy="16.1" r="1.6" fill="#555"/><circle cx="2295" cy="16.1" r="1.6" fill="#555"/><path d="M33,257.7 L28.3,261.6 L33,265.5 M28.5,261.6 L39,261.6 A8.3,8.3 0 1 1 30.7,269.9" fill="none" stroke="#aaaaaa" stroke-width="1.2" /><path d="M81.3,257.4 L87.6,257.4 L83.9,265.5 L90.5,265.5 L75.5,278.1 L79.2,269.5 L74.4,269.5 Z" fill="none" stroke="#aaaaaa" stroke-width="1.2" /><path d="M2166.3,269 L2172.7,274.7 L2186.6,260.7" fill="none" stroke="#b4b4b4" stroke-width="1.3" /><path d="M2216.1,260.3 L2232,275.8 M2232,260.3 L2216.1,275.8" fill="none" stroke="#b4b4b4" stroke-width="1.3" /><path d="M2274.5,257.5 L2281.5,264.5 L2278.8,266 L2274.5,271.5 L2275.5,275.3 L2273,277 L2263.5,267.5 L2265.3,265 L2269,266 L2274.5,261.8 L2276,259 Z" fill="#222" stroke="#1a1a1a" stroke-width="1" /><line x1="2268.3" y1="272.3" x2="2260.8" y2="279.2" stroke="#222" stroke-width="1.4" stroke-linecap="butt"/></svg><div style="position:absolute;left:14px;top:329px;width:24px;height:33px;background:#f1f1f1;box-shadow:0 2px 3px rgba(0,0,0,.18)"></div><div style="position:absolute;left:20.9px;top:338.3px;width:2.6px;height:2.6px;background:#222"></div><div style="position:absolute;left:20.9px;top:343.59999999999997px;width:2.6px;height:2.6px;background:#222"></div><div style="position:absolute;left:20.9px;top:348.8px;width:2.6px;height:2.6px;background:#222"></div><div style="position:absolute;left:27.2px;top:338.3px;width:2.6px;height:2.6px;background:#222"></div><div style="position:absolute;left:27.2px;top:343.59999999999997px;width:2.6px;height:2.6px;background:#222"></div><div style="position:absolute;left:27.2px;top:348.8px;width:2.6px;height:2.6px;background:#222"></div><div class="t" style="left:36.55px;transform-origin:0.95px 18px;top:336px;font-size:21.2px;color:#252423;font-weight:normal;font-family:'Liberation Sans', sans-serif;transform:scaleX(1.0081);">Sales, Profit, Quantity, Discount by Category, Sub-Category</div><div style="position:absolute;left:36px;top:396px;width:2000.5px;height:58px;background:#fff"></div><div style="position:absolute;left:36px;top:455px;width:2000.5px;height:50px;background:#f3f3f3"></div><div style="position:absolute;left:36px;top:505px;width:2000.5px;height:35px;background:#ffffff"></div><div style="position:absolute;left:36px;top:540px;width:2000.5px;height:33px;background:#f3f3f3"></div><div style="position:absolute;left:36px;top:573px;width:2000.5px;height:33px;background:#ffffff"></div><div style="position:absolute;left:36px;top:606px;width:2000.5px;height:32.5px;background:#f3f3f3"></div><div style="position:absolute;left:36px;top:638.5px;width:2000.5px;height:32.5px;background:#ffffff"></div><div style="position:absolute;left:36px;top:671px;width:2000.5px;height:33px;background:#f3f3f3"></div><div style="position:absolute;left:36px;top:704px;width:2000.5px;height:33px;background:#ffffff"></div><div style="position:absolute;left:36px;top:737px;width:2000.5px;height:33px;background:#f3f3f3"></div><div style="position:absolute;left:36px;top:770px;width:2000.5px;height:33px;background:#ffffff"></div><div style="position:absolute;left:36px;top:803px;width:2000.5px;height:32px;background:#f3f3f3"></div><div style="position:absolute;left:36px;top:835px;width:2000.5px;height:35px;background:#ffffff"></div><div style="position:absolute;left:36px;top:870px;width:2000.5px;height:33px;background:#f3f3f3"></div><div style="position:absolute;left:36px;top:903px;width:2000.5px;height:33px;background:#ffffff"></div><div style="position:absolute;left:36px;top:936px;width:2000.5px;height:32px;background:#f3f3f3"></div><div style="position:absolute;left:36px;top:968px;width:2000.5px;height:33px;background:#ffffff"></div><div style="position:absolute;left:36px;top:1001px;width:2000.5px;height:33px;background:#f3f3f3"></div><div style="position:absolute;left:36px;top:1034px;width:2000.5px;height:32.5px;background:#ffffff"></div><div style="position:absolute;left:36px;top:1066.5px;width:2000.5px;height:32.5px;background:#f3f3f3"></div><div style="position:absolute;left:36px;top:1099px;width:2000.5px;height:33px;background:#ffffff"></div><div style="position:absolute;left:36px;top:1132px;width:2000.5px;height:31px;background:#f3f3f3"></div><div style="position:absolute;left:36px;top:395px;width:2000.5px;height:1.5px;background:#e4e4e4"></div><div style="position:absolute;left:36px;top:453.5px;width:2000.5px;height:2px;background:#c2c2c2"></div><div style="position:absolute;left:36px;top:1162px;width:2000.5px;height:1.5px;background:#b8b8b8"></div><div style="position:absolute;left:35.5px;top:395px;width:1.5px;height:768px;background:#e0e0e0"></div><div style="position:absolute;left:2035.5px;top:395px;width:1.5px;height:768px;background:#e0e0e0"></div><div style="position:absolute;left:252px;top:396px;width:1.5px;height:767px;background:#b4b4b4"></div><div style="position:absolute;left:396.8px;top:396px;width:1.2px;height:767px;background:#e6e6e6"></div><div style="position:absolute;left:542.0px;top:396px;width:1.2px;height:767px;background:#e6e6e6"></div><div style="position:absolute;left:687.4px;top:396px;width:1.2px;height:767px;background:#e6e6e6"></div><div style="position:absolute;left:832.6px;top:396px;width:1.2px;height:767px;background:#e6e6e6"></div><div style="position:absolute;left:1031.1px;top:396px;width:1.2px;height:767px;background:#e6e6e6"></div><div style="position:absolute;left:1238.7px;top:396px;width:1.2px;height:767px;background:#e6e6e6"></div><div style="position:absolute;left:1475.2px;top:396px;width:1.2px;height:767px;background:#e6e6e6"></div><div class="t" style="left:69.55px;transform-origin:1.05px 18px;top:416px;font-size:21px;color:#252423;font-weight:normal;font-family:'Liberation Sans', sans-serif;transform:scaleX(1.0094);">Category</div><div class="t" style="right:1911.93px;transform-origin:51.76px 18px;top:404px;font-size:21px;color:#252423;font-weight:normal;font-family:'Liberation Sans', sans-serif;transform:scaleX(0.9248);">Sales</div><div class="t" style="right:1912.03px;transform-origin:110.08px 15px;top:430px;font-size:18.5px;color:#252423;font-weight:normal;font-family:'Liberation Sans', sans-serif;transform:scaleX(0.9369);">in Thousands</div><div class="t" style="right:1767.31px;transform-origin:48.82px 18px;top:404px;font-size:21px;color:#252423;font-weight:normal;font-family:'Liberation Sans', sans-serif;transform:scaleX(1.0966);">Profit</div><div class="t" style="right:1766.83px;transform-origin:110.08px 15px;top:430px;font-size:18.5px;color:#252423;font-weight:normal;font-family:'Liberation Sans', sans-serif;transform:scaleX(0.9369);">in Thousands</div><div class="t" style="right:1622.12px;transform-origin:78.22px 18px;top:404px;font-size:21px;color:#252423;font-weight:normal;font-family:'Liberation Sans', sans-serif;transform:scaleX(1.0740);">Quantity</div><div class="t" style="right:1621.43px;transform-origin:110.08px 15px;top:430px;font-size:18.5px;color:#252423;font-weight:normal;font-family:'Liberation Sans', sans-serif;transform:scaleX(0.9369);">in Thousands</div><div class="t" style="right:1476.78px;transform-origin:81.59px 18px;top:415px;font-size:21px;color:#252423;font-weight:normal;font-family:'Liberation Sans', sans-serif;">Discount</div><div class="t" style="right:1279.28px;transform-origin:152.78px 18px;top:415px;font-size:21px;color:#252423;font-weight:normal;font-family:'Liberation Sans', sans-serif;transform:scaleX(1.0418);">% Cont. of Profit</div><div class="t" style="right:1071.1px;transform-origin:155.72px 18px;top:415px;font-size:21px;color:#252423;font-weight:normal;font-family:'Liberation Sans', sans-serif;transform:scaleX(0.9872);">% Cont. of Sales</div><div class="t" style="right:835.11px;transform-origin:187.32px 18px;top:415px;font-size:21px;color:#252423;font-weight:normal;font-family:'Liberation Sans', sans-serif;transform:scaleX(1.0279);">% Cont. GT of Profit</div><div class="t" style="left:837.36px;transform-origin:0.64px 17px;top:415px;font-size:21.5px;color:#707070;font-weight:normal;font-family:'Liberation Serif', serif;font-style:italic">fx</div><div class="t" style="left:1035.36px;transform-origin:0.64px 17px;top:415px;font-size:21.5px;color:#707070;font-weight:normal;font-family:'Liberation Serif', serif;font-style:italic">fx</div><div class="t" style="left:1244.36px;transform-origin:0.64px 17px;top:415px;font-size:21.5px;color:#707070;font-weight:normal;font-family:'Liberation Serif', serif;font-style:italic">fx</div><div class="t" style="left:1481.36px;transform-origin:0.64px 17px;top:415px;font-size:21.5px;color:#707070;font-weight:normal;font-family:'Liberation Serif', serif;font-style:italic">fx</div><div class="t" style="left:1499.26px;transform-origin:0.74px 18px;top:413px;font-size:21px;color:#252423;font-weight:normal;font-family:'Liberation Sans', sans-serif;">% Cont. GT of Sales</div><div style="position:absolute;left:48.5px;top:471.5px;width:15px;height:14px;border:1.3px solid #3a3a3a;box-sizing:border-box"></div><div style="position:absolute;left:51.5px;top:477.8px;width:9px;height:1.4px;background:#3a3a3a"></div><div class="t" style="left:74.97px;transform-origin:0.52px 18px;top:470px;font-size:21px;color:#252423;font-weight:bold;font-family:'Liberation Sans', sans-serif;transform:scaleX(1.0770);">All</div><div class="t" style="right:1915.03px;transform-origin:99.65px 16px;top:472px;font-size:21px;color:#1f1f1f;font-weight:bold;font-family:'Liberation Mono', monospace;transform:scale(0.94,1.08);">2,297.20</div><div class="t" style="right:1769.84px;transform-origin:74.45px 16px;top:472px;font-size:21px;color:#1f1f1f;font-weight:bold;font-family:'Liberation Mono', monospace;transform:scale(0.94,1.08);">286.40</div><div class="t" style="right:1624.23px;transform-origin:61.64px 16px;top:472px;font-size:21px;color:#1f1f1f;font-weight:bold;font-family:'Liberation Mono', monospace;transform:scale(0.94,1.08);">37.87</div><div class="t" style="right:1479.13px;transform-origin:99.54px 16px;top:472px;font-size:21px;color:#1f1f1f;font-weight:bold;font-family:'Liberation Mono', monospace;transform:scale(0.94,1.08);">1,561.09</div><div class="t" style="right:1284.39px;transform-origin:88.2px 16px;top:472px;font-size:21px;color:#1f1f1f;font-weight:bold;font-family:'Liberation Mono', monospace;transform:scale(0.985,1.08);">100.00%</div><div class="t" style="right:1076.79px;transform-origin:88.2px 16px;top:472px;font-size:21px;color:#1f1f1f;font-weight:bold;font-family:'Liberation Mono', monospace;transform:scale(0.985,1.08);">100.00%</div><div class="t" style="right:840.29px;transform-origin:88.2px 16px;top:472px;font-size:21px;color:#1f1f1f;font-weight:bold;font-family:'Liberation Mono', monospace;transform:scale(0.985,1.08);">100.00%</div><div class="t" style="right:279.39px;transform-origin:88.2px 16px;top:472px;font-size:21px;color:#1f1f1f;font-weight:bold;font-family:'Liberation Mono', monospace;transform:scale(0.985,1.08);">100.00%</div><div style="position:absolute;left:48.5px;top:515.0px;width:15px;height:14px;border:1.3px solid #3a3a3a;box-sizing:border-box"></div><div style="position:absolute;left:51.5px;top:521.3px;width:9px;height:1.4px;background:#3a3a3a"></div><div class="t" style="left:75.29px;transform-origin:0.21px 18px;top:513px;font-size:21px;color:#252423;font-weight:bold;font-family:'Liberation Sans', sans-serif;transform:scaleX(0.9256);">Technology</div><div class="t" style="right:1915.14px;transform-origin:74.55px 16px;top:515px;font-size:21px;color:#1f1f1f;font-weight:bold;font-family:'Liberation Mono', monospace;transform:scale(0.94,1.08);">836.15</div><div class="t" style="right:1769.94px;transform-origin:74.55px 16px;top:515px;font-size:21px;color:#1f1f1f;font-weight:bold;font-family:'Liberation Mono', monospace;transform:scale(0.94,1.08);">145.45</div><div class="t" style="right:1624.96px;transform-origin:49.77px 16px;top:515px;font-size:21px;color:#1f1f1f;font-weight:bold;font-family:'Liberation Mono', monospace;transform:scale(0.94,1.08);">6.94</div><div class="t" style="right:1479.24px;transform-origin:74.45px 16px;top:515px;font-size:21px;color:#1f1f1f;font-weight:bold;font-family:'Liberation Mono', monospace;transform:scale(0.94,1.08);">244.40</div><div class="t" style="right:1284.39px;transform-origin:75.6px 16px;top:515px;font-size:21px;color:#1f1f1f;font-weight:bold;font-family:'Liberation Mono', monospace;transform:scale(0.985,1.08);">50.79%</div><div class="t" style="right:1076.79px;transform-origin:75.6px 16px;top:515px;font-size:21px;color:#1f1f1f;font-weight:bold;font-family:'Liberation Mono', monospace;transform:scale(0.985,1.08);">36.40%</div><div class="t" style="right:840.29px;transform-origin:75.6px 16px;top:515px;font-size:21px;color:#1f1f1f;font-weight:bold;font-family:'Liberation Mono', monospace;transform:scale(0.985,1.08);">50.79%</div><div style="position:absolute;left:1485px;top:509.5px;width:412.77599999999995px;height:26.5px;background:#3a7d23"></div><div class="t" style="left:1909.33px;transform-origin:0.94px 16px;top:515px;font-size:21px;color:#1b4a7e;font-weight:bold;font-family:'Liberation Mono', monospace;transform:scale(1.04,1.08);">36.40%</div><div class="t" style="left:83.52px;transform-origin:1.68px 18px;top:546px;font-size:21px;color:#252423;font-weight:normal;font-family:'Liberation Sans', sans-serif;transform:scaleX(0.9742);">Phones</div><div class="t" style="right:1915.14px;transform-origin:74.55px 16px;top:548px;font-size:21px;color:#252525;font-weight:normal;font-family:'Liberation Mono', monospace;transform:scale(0.94,1.08);">330.01</div><div class="t" style="right:1769.52px;transform-origin:61.53px 16px;top:548px;font-size:21px;color:#252525;font-weight:normal;font-family:'Liberation Mono', monospace;transform:scale(0.94,1.08);">44.52</div><div class="t" style="right:1624.12px;transform-origin:48.93px 16px;top:548px;font-size:21px;color:#252525;font-weight:normal;font-family:'Liberation Mono', monospace;transform:scale(0.94,1.08);">3.29</div><div class="t" style="right:1479.13px;transform-origin:74.34px 16px;top:548px;font-size:21px;color:#252525;font-weight:normal;font-family:'Liberation Mono', monospace;transform:scale(0.94,1.08);">137.40</div><div class="t" style="right:1284.39px;transform-origin:75.6px 16px;top:548px;font-size:21px;color:#252525;font-weight:normal;font-family:'Liberation Mono', monospace;transform:scale(0.985,1.08);">30.60%</div><div class="t" style="right:1076.79px;transform-origin:75.6px 16px;top:548px;font-size:21px;color:#252525;font-weight:normal;font-family:'Liberation Mono', monospace;transform:scale(0.985,1.08);">39.47%</div><div class="t" style="right:840.29px;transform-origin:75.6px 16px;top:548px;font-size:21px;color:#252525;font-weight:normal;font-family:'Liberation Mono', monospace;transform:scale(0.985,1.08);">15.54%</div><div style="position:absolute;left:1485px;top:544.5px;width:162.95579999999998px;height:24.5px;background:#3a7d23"></div><div class="t" style="left:1658.99px;transform-origin:1.47px 16px;top:548px;font-size:21px;color:#1b4a7e;font-weight:normal;font-family:'Liberation Mono', monospace;transform:scale(1.04,1.08);">14.37%</div><div class="t" style="left:83.52px;transform-origin:1.68px 18px;top:579px;font-size:21px;color:#252423;font-weight:normal;font-family:'Liberation Sans', sans-serif;transform:scaleX(1.0095);">Machines</div><div class="t" style="right:1915.14px;transform-origin:74.55px 16px;top:581px;font-size:21px;color:#252525;font-weight:normal;font-family:'Liberation Mono', monospace;transform:scale(0.94,1.08);">189.24</div><div class="t" style="right:1769.63px;transform-origin:49.04px 16px;top:581px;font-size:21px;color:#252525;font-weight:normal;font-family:'Liberation Mono', monospace;transform:scale(0.94,1.08);">3.38</div><div class="t" style="right:1624.54px;transform-origin:49.35px 16px;top:581px;font-size:21px;color:#252525;font-weight:normal;font-family:'Liberation Mono', monospace;transform:scale(0.94,1.08);">0.44</div><div class="t" style="right:1479.13px;transform-origin:61.74px 16px;top:581px;font-size:21px;color:#252525;font-weight:normal;font-family:'Liberation Mono', monospace;transform:scale(0.94,1.08);">35.20</div><div class="t" style="right:1284.39px;transform-origin:63.0px 16px;top:581px;font-size:21px;color:#252525;font-weight:normal;font-family:'Liberation Mono', monospace;transform:scale(0.985,1.08);">2.33%</div><div class="t" style="right:1076.79px;transform-origin:75.6px 16px;top:581px;font-size:21px;color:#252525;font-weight:normal;font-family:'Liberation Mono', monospace;transform:scale(0.985,1.08);">22.63%</div><div class="t" style="right:840.29px;transform-origin:63.0px 16px;top:581px;font-size:21px;color:#252525;font-weight:normal;font-family:'Liberation Mono', monospace;transform:scale(0.985,1.08);">1.18%</div><div style="position:absolute;left:1485px;top:577.5px;width:93.44160000000001px;height:24.5px;background:#3a7d23"></div><div class="t" style="left:1589.58px;transform-origin:1.36px 16px;top:581px;font-size:21px;color:#1b4a7e;font-weight:normal;font-family:'Liberation Mono', monospace;transform:scale(1.04,1.08);">8.24%</div><div class="t" style="left:85.2px;transform-origin:0.0px 18px;top:612px;font-size:21px;color:#252423;font-weight:normal;font-family:'Liberation Sans', sans-serif;transform:scaleX(0.9479);">Accessories</div><div class="t" style="right:1914.83px;transform-origin:74.24px 16px;top:614px;font-size:21px;color:#252525;font-weight:normal;font-family:'Liberation Mono', monospace;transform:scale(0.94,1.08);">167.38</div><div class="t" style="right:1769.94px;transform-origin:61.95px 16px;top:614px;font-size:21px;color:#252525;font-weight:normal;font-family:'Liberation Mono', monospace;transform:scale(0.94,1.08);">41.94</div><div class="t" style="right:1624.23px;transform-origin:49.04px 16px;top:614px;font-size:21px;color:#252525;font-weight:normal;font-family:'Liberation Mono', monospace;transform:scale(0.94,1.08);">2.98</div><div class="t" style="right:1479.13px;transform-origin:61.74px 16px;top:614px;font-size:21px;color:#252525;font-weight:normal;font-family:'Liberation Mono', monospace;transform:scale(0.94,1.08);">60.80</div><div class="t" style="right:1284.39px;transform-origin:75.6px 16px;top:614px;font-size:21px;color:#252525;font-weight:normal;font-family:'Liberation Mono', monospace;transform:scale(0.985,1.08);">28.83%</div><div class="t" style="right:1076.79px;transform-origin:75.6px 16px;top:614px;font-size:21px;color:#252525;font-weight:normal;font-family:'Liberation Mono', monospace;transform:scale(0.985,1.08);">20.02%</div><div class="t" style="right:840.29px;transform-origin:75.6px 16px;top:614px;font-size:21px;color:#252525;font-weight:normal;font-family:'Liberation Mono', monospace;transform:scale(0.985,1.08);">14.64%</div><div style="position:absolute;left:1485px;top:610.5px;width:82.6686px;height:24.0px;background:#3a7d23"></div><div class="t" style="left:1578.59px;transform-origin:1.58px 16px;top:614px;font-size:21px;color:#1b4a7e;font-weight:normal;font-family:'Liberation Mono', monospace;transform:scale(1.04,1.08);">7.29%</div><div class="t" style="left:84.15px;transform-origin:1.05px 18px;top:644px;font-size:21px;color:#252423;font-weight:normal;font-family:'Liberation Sans', sans-serif;transform:scaleX(0.9906);">Copiers</div><div class="t" style="right:1914.83px;transform-origin:74.24px 16px;top:646px;font-size:21px;color:#252525;font-weight:normal;font-family:'Liberation Mono', monospace;transform:scale(0.94,1.08);">149.53</div><div class="t" style="right:1769.52px;transform-origin:61.53px 16px;top:646px;font-size:21px;color:#252525;font-weight:normal;font-family:'Liberation Mono', monospace;transform:scale(0.94,1.08);">55.62</div><div class="t" style="right:1624.23px;transform-origin:49.04px 16px;top:646px;font-size:21px;color:#252525;font-weight:normal;font-family:'Liberation Mono', monospace;transform:scale(0.94,1.08);">0.23</div><div class="t" style="right:1479.13px;transform-origin:61.74px 16px;top:646px;font-size:21px;color:#252525;font-weight:normal;font-family:'Liberation Mono', monospace;transform:scale(0.94,1.08);">11.00</div><div class="t" style="right:1284.39px;transform-origin:75.6px 16px;top:646px;font-size:21px;color:#252525;font-weight:normal;font-family:'Liberation Mono', monospace;transform:scale(0.985,1.08);">38.24%</div><div class="t" style="right:1076.79px;transform-origin:75.6px 16px;top:646px;font-size:21px;color:#252525;font-weight:normal;font-family:'Liberation Mono', monospace;transform:scale(0.985,1.08);">17.88%</div><div class="t" style="right:840.29px;transform-origin:75.6px 16px;top:646px;font-size:21px;color:#252525;font-weight:normal;font-family:'Liberation Mono', monospace;transform:scale(0.985,1.08);">19.42%</div><div style="position:absolute;left:1485px;top:643.0px;width:73.82339999999999px;height:24.0px;background:#3a7d23"></div><div class="t" style="left:1569.75px;transform-origin:1.58px 16px;top:646px;font-size:21px;color:#1b4a7e;font-weight:normal;font-family:'Liberation Mono', monospace;transform:scale(1.04,1.08);">6.51%</div><div style="position:absolute;left:48.5px;top:680.0px;width:15px;height:14px;border:1.3px solid #3a3a3a;box-sizing:border-box"></div><div style="position:absolute;left:51.5px;top:686.3px;width:9px;height:1.4px;background:#3a3a3a"></div><div class="t" style="left:74.14px;transform-origin:1.36px 18px;top:678px;font-size:21px;color:#252423;font-weight:bold;font-family:'Liberation Sans', sans-serif;transform:scaleX(0.9579);">Furniture</div><div class="t" style="right:1915.04px;transform-origin:74.44px 16px;top:680px;font-size:21px;color:#1f1f1f;font-weight:bold;font-family:'Liberation Mono', monospace;transform:scale(0.94,1.08);">742.00</div><div class="t" style="right:1769.94px;transform-origin:61.95px 16px;top:680px;font-size:21px;color:#1f1f1f;font-weight:bold;font-family:'Liberation Mono', monospace;transform:scale(0.94,1.08);">18.45</div><div class="t" style="right:1624.54px;transform-origin:49.35px 16px;top:680px;font-size:21px;color:#1f1f1f;font-weight:bold;font-family:'Liberation Mono', monospace;transform:scale(0.94,1.08);">8.03</div><div class="t" style="right:1479.13px;transform-origin:74.34px 16px;top:680px;font-size:21px;color:#1f1f1f;font-weight:bold;font-family:'Liberation Mono', monospace;transform:scale(0.94,1.08);">368.89</div><div class="t" style="right:1284.39px;transform-origin:63.0px 16px;top:680px;font-size:21px;color:#1f1f1f;font-weight:bold;font-family:'Liberation Mono', monospace;transform:scale(0.985,1.08);">6.44%</div><div class="t" style="right:1076.79px;transform-origin:75.6px 16px;top:680px;font-size:21px;color:#1f1f1f;font-weight:bold;font-family:'Liberation Mono', monospace;transform:scale(0.985,1.08);">32.30%</div><div class="t" style="right:840.29px;transform-origin:63.0px 16px;top:680px;font-size:21px;color:#1f1f1f;font-weight:bold;font-family:'Liberation Mono', monospace;transform:scale(0.985,1.08);">6.44%</div><div style="position:absolute;left:1485px;top:675.5px;width:366.282px;height:24.5px;background:#3a7d23"></div><div class="t" style="left:1862.84px;transform-origin:0.94px 16px;top:680px;font-size:21px;color:#1b4a7e;font-weight:bold;font-family:'Liberation Mono', monospace;transform:scale(1.04,1.08);">32.30%</div><div class="t" style="left:84.15px;transform-origin:1.05px 18px;top:710px;font-size:21px;color:#252423;font-weight:normal;font-family:'Liberation Sans', sans-serif;transform:scaleX(0.9863);">Chairs</div><div class="t" style="right:1914.83px;transform-origin:74.24px 16px;top:712px;font-size:21px;color:#252525;font-weight:normal;font-family:'Liberation Mono', monospace;transform:scale(0.94,1.08);">328.45</div><div class="t" style="right:1769.52px;transform-origin:61.53px 16px;top:712px;font-size:21px;color:#252525;font-weight:normal;font-family:'Liberation Mono', monospace;transform:scale(0.94,1.08);">26.59</div><div class="t" style="right:1624.23px;transform-origin:49.04px 16px;top:712px;font-size:21px;color:#252525;font-weight:normal;font-family:'Liberation Mono', monospace;transform:scale(0.94,1.08);">2.36</div><div class="t" style="right:1479.13px;transform-origin:74.34px 16px;top:712px;font-size:21px;color:#252525;font-weight:normal;font-family:'Liberation Mono', monospace;transform:scale(0.94,1.08);">105.00</div><div class="t" style="right:1284.39px;transform-origin:88.2px 16px;top:712px;font-size:21px;color:#252525;font-weight:normal;font-family:'Liberation Mono', monospace;transform:scale(0.985,1.08);">144.11%</div><div class="t" style="right:1076.79px;transform-origin:75.6px 16px;top:712px;font-size:21px;color:#252525;font-weight:normal;font-family:'Liberation Mono', monospace;transform:scale(0.985,1.08);">44.27%</div><div class="t" style="right:840.29px;transform-origin:63.0px 16px;top:712px;font-size:21px;color:#252525;font-weight:normal;font-family:'Liberation Mono', monospace;transform:scale(0.985,1.08);">9.28%</div><div style="position:absolute;left:1485px;top:708.5px;width:162.162px;height:24.5px;background:#3a7d23"></div><div class="t" style="left:1658.19px;transform-origin:1.47px 16px;top:712px;font-size:21px;color:#1b4a7e;font-weight:normal;font-family:'Liberation Mono', monospace;transform:scale(1.04,1.08);">14.30%</div><div class="t" style="left:84.78px;transform-origin:0.42px 18px;top:743px;font-size:21px;color:#252423;font-weight:normal;font-family:'Liberation Sans', sans-serif;transform:scaleX(0.9675);">Tables</div><div class="t" style="right:1914.51px;transform-origin:73.92px 16px;top:745px;font-size:21px;color:#252525;font-weight:normal;font-family:'Liberation Mono', monospace;transform:scale(0.94,1.08);">206.97</div><div class="t" style="right:1769.63px;transform-origin:74.24px 16px;top:745px;font-size:21px;color:#252525;font-weight:normal;font-family:'Liberation Mono', monospace;transform:scale(0.94,1.08);">-17.73</div><div class="t" style="right:1624.54px;transform-origin:49.35px 16px;top:745px;font-size:21px;color:#252525;font-weight:normal;font-family:'Liberation Mono', monospace;transform:scale(0.94,1.08);">1.24</div><div class="t" style="right:1479.03px;transform-origin:61.64px 16px;top:745px;font-size:21px;color:#252525;font-weight:normal;font-family:'Liberation Mono', monospace;transform:scale(0.94,1.08);">83.35</div><div class="t" style="right:1284.39px;transform-origin:88.2px 16px;top:745px;font-size:21px;color:#252525;font-weight:normal;font-family:'Liberation Mono', monospace;transform:scale(0.985,1.08);">-96.07%</div><div class="t" style="right:1076.79px;transform-origin:75.6px 16px;top:745px;font-size:21px;color:#252525;font-weight:normal;font-family:'Liberation Mono', monospace;transform:scale(0.985,1.08);">27.89%</div><div class="t" style="right:840.29px;transform-origin:75.6px 16px;top:745px;font-size:21px;color:#252525;font-weight:normal;font-family:'Liberation Mono', monospace;transform:scale(0.985,1.08);">-6.19%</div><div style="position:absolute;left:1485px;top:741.5px;width:102.1734px;height:24.5px;background:#3a7d23"></div><div class="t" style="left:1598.2px;transform-origin:1.47px 16px;top:745px;font-size:21px;color:#1b4a7e;font-weight:normal;font-family:'Liberation Mono', monospace;transform:scale(1.04,1.08);">9.01%</div><div class="t" style="left:83.52px;transform-origin:1.68px 18px;top:776px;font-size:21px;color:#252423;font-weight:normal;font-family:'Liberation Sans', sans-serif;transform:scaleX(0.9534);">Bookcases</div><div class="t" style="right:1914.83px;transform-origin:74.24px 16px;top:778px;font-size:21px;color:#252525;font-weight:normal;font-family:'Liberation Mono', monospace;transform:scale(0.94,1.08);">114.88</div><div class="t" style="right:1769.31px;transform-origin:61.32px 16px;top:778px;font-size:21px;color:#252525;font-weight:normal;font-family:'Liberation Mono', monospace;transform:scale(0.94,1.08);">-3.47</div><div class="t" style="right:1623.91px;transform-origin:48.72px 16px;top:778px;font-size:21px;color:#252525;font-weight:normal;font-family:'Liberation Mono', monospace;transform:scale(0.94,1.08);">0.87</div><div class="t" style="right:1479.34px;transform-origin:61.95px 16px;top:778px;font-size:21px;color:#252525;font-weight:normal;font-family:'Liberation Mono', monospace;transform:scale(0.94,1.08);">48.14</div><div class="t" style="right:1284.39px;transform-origin:88.2px 16px;top:778px;font-size:21px;color:#252525;font-weight:normal;font-family:'Liberation Mono', monospace;transform:scale(0.985,1.08);">-18.82%</div><div class="t" style="right:1076.79px;transform-origin:75.6px 16px;top:778px;font-size:21px;color:#252525;font-weight:normal;font-family:'Liberation Mono', monospace;transform:scale(0.985,1.08);">15.48%</div><div class="t" style="right:840.29px;transform-origin:75.6px 16px;top:778px;font-size:21px;color:#252525;font-weight:normal;font-family:'Liberation Mono', monospace;transform:scale(0.985,1.08);">-1.21%</div><div style="position:absolute;left:1485px;top:774.5px;width:56.7px;height:24.5px;background:#3a7d23"></div><div class="t" style="left:1552.84px;transform-origin:1.36px 16px;top:778px;font-size:21px;color:#1b4a7e;font-weight:normal;font-family:'Liberation Mono', monospace;transform:scale(1.04,1.08);">5.00%</div><div class="t" style="left:83.52px;transform-origin:1.68px 18px;top:809px;font-size:21px;color:#252423;font-weight:normal;font-family:'Liberation Sans', sans-serif;transform:scaleX(0.9863);">Furnishings</div><div class="t" style="right:1915.14px;transform-origin:61.95px 16px;top:811px;font-size:21px;color:#252525;font-weight:normal;font-family:'Liberation Mono', monospace;transform:scale(0.94,1.08);">91.71</div><div class="t" style="right:1769.63px;transform-origin:61.64px 16px;top:811px;font-size:21px;color:#252525;font-weight:normal;font-family:'Liberation Mono', monospace;transform:scale(0.94,1.08);">13.06</div><div class="t" style="right:1624.23px;transform-origin:49.04px 16px;top:811px;font-size:21px;color:#252525;font-weight:normal;font-family:'Liberation Mono', monospace;transform:scale(0.94,1.08);">3.56</div><div class="t" style="right:1479.13px;transform-origin:74.34px 16px;top:811px;font-size:21px;color:#252525;font-weight:normal;font-family:'Liberation Mono', monospace;transform:scale(0.94,1.08);">132.40</div><div class="t" style="right:1284.39px;transform-origin:75.6px 16px;top:811px;font-size:21px;color:#252525;font-weight:normal;font-family:'Liberation Mono', monospace;transform:scale(0.985,1.08);">70.78%</div><div class="t" style="right:1076.79px;transform-origin:75.6px 16px;top:811px;font-size:21px;color:#252525;font-weight:normal;font-family:'Liberation Mono', monospace;transform:scale(0.985,1.08);">12.36%</div><div class="t" style="right:840.29px;transform-origin:63.0px 16px;top:811px;font-size:21px;color:#252525;font-weight:normal;font-family:'Liberation Mono', monospace;transform:scale(0.985,1.08);">4.56%</div><div style="position:absolute;left:1485px;top:807.5px;width:45.2466px;height:23.5px;background:#3a7d23"></div><div class="t" style="left:1541.38px;transform-origin:1.36px 16px;top:811px;font-size:21px;color:#1b4a7e;font-weight:normal;font-family:'Liberation Mono', monospace;transform:scale(1.04,1.08);">3.99%</div><div style="position:absolute;left:48.5px;top:845.0px;width:15px;height:14px;border:1.3px solid #3a3a3a;box-sizing:border-box"></div><div style="position:absolute;left:51.5px;top:851.3px;width:9px;height:1.4px;background:#3a3a3a"></div><div class="t" style="left:74.66px;transform-origin:0.84px 18px;top:843px;font-size:21px;color:#252423;font-weight:bold;font-family:'Liberation Sans', sans-serif;transform:scaleX(0.9517);">Office Supplies</div><div class="t" style="right:1915.14px;transform-origin:74.55px 16px;top:845px;font-size:21px;color:#1f1f1f;font-weight:bold;font-family:'Liberation Mono', monospace;transform:scale(0.94,1.08);">719.05</div><div class="t" style="right:1769.73px;transform-origin:74.34px 16px;top:845px;font-size:21px;color:#1f1f1f;font-weight:bold;font-family:'Liberation Mono', monospace;transform:scale(0.94,1.08);">122.49</div><div class="t" style="right:1624.75px;transform-origin:62.16px 16px;top:845px;font-size:21px;color:#1f1f1f;font-weight:bold;font-family:'Liberation Mono', monospace;transform:scale(0.94,1.08);">22.91</div><div class="t" style="right:1479.24px;transform-origin:74.45px 16px;top:845px;font-size:21px;color:#1f1f1f;font-weight:bold;font-family:'Liberation Mono', monospace;transform:scale(0.94,1.08);">947.80</div><div class="t" style="right:1284.39px;transform-origin:75.6px 16px;top:845px;font-size:21px;color:#1f1f1f;font-weight:bold;font-family:'Liberation Mono', monospace;transform:scale(0.985,1.08);">42.77%</div><div class="t" style="right:1076.79px;transform-origin:75.6px 16px;top:845px;font-size:21px;color:#1f1f1f;font-weight:bold;font-family:'Liberation Mono', monospace;transform:scale(0.985,1.08);">31.30%</div><div class="t" style="right:840.29px;transform-origin:75.6px 16px;top:845px;font-size:21px;color:#1f1f1f;font-weight:bold;font-family:'Liberation Mono', monospace;transform:scale(0.985,1.08);">42.77%</div><div style="position:absolute;left:1485px;top:839.5px;width:354.942px;height:26.5px;background:#3a7d23"></div><div class="t" style="left:1851.5px;transform-origin:0.94px 16px;top:845px;font-size:21px;color:#1b4a7e;font-weight:bold;font-family:'Liberation Mono', monospace;transform:scale(1.04,1.08);">31.30%</div><div class="t" style="left:84.26px;transform-origin:0.94px 18px;top:876px;font-size:21px;color:#252423;font-weight:normal;font-family:'Liberation Sans', sans-serif;transform:scaleX(0.9761);">Storage</div><div class="t" style="right:1915.14px;transform-origin:74.55px 16px;top:878px;font-size:21px;color:#252525;font-weight:normal;font-family:'Liberation Mono', monospace;transform:scale(0.94,1.08);">223.84</div><div class="t" style="right:1769.63px;transform-origin:61.64px 16px;top:878px;font-size:21px;color:#252525;font-weight:normal;font-family:'Liberation Mono', monospace;transform:scale(0.94,1.08);">21.28</div><div class="t" style="right:1624.23px;transform-origin:49.04px 16px;top:878px;font-size:21px;color:#252525;font-weight:normal;font-family:'Liberation Mono', monospace;transform:scale(0.94,1.08);">3.16</div><div class="t" style="right:1479.13px;transform-origin:61.74px 16px;top:878px;font-size:21px;color:#252525;font-weight:normal;font-family:'Liberation Mono', monospace;transform:scale(0.94,1.08);">63.20</div><div class="t" style="right:1284.39px;transform-origin:75.6px 16px;top:878px;font-size:21px;color:#252525;font-weight:normal;font-family:'Liberation Mono', monospace;transform:scale(0.985,1.08);">17.37%</div><div class="t" style="right:1076.79px;transform-origin:75.6px 16px;top:878px;font-size:21px;color:#252525;font-weight:normal;font-family:'Liberation Mono', monospace;transform:scale(0.985,1.08);">31.13%</div><div class="t" style="right:840.29px;transform-origin:63.0px 16px;top:878px;font-size:21px;color:#252525;font-weight:normal;font-family:'Liberation Mono', monospace;transform:scale(0.985,1.08);">7.43%</div><div style="position:absolute;left:1485px;top:874.5px;width:110.4516px;height:24.5px;background:#3a7d23"></div><div class="t" style="left:1606.48px;transform-origin:1.47px 16px;top:878px;font-size:21px;color:#1b4a7e;font-weight:normal;font-family:'Liberation Mono', monospace;transform:scale(1.04,1.08);">9.74%</div><div class="t" style="left:83.52px;transform-origin:1.68px 18px;top:909px;font-size:21px;color:#252423;font-weight:normal;font-family:'Liberation Sans', sans-serif;transform:scaleX(1.0091);">Binders</div><div class="t" style="right:1915.14px;transform-origin:74.55px 16px;top:911px;font-size:21px;color:#252525;font-weight:normal;font-family:'Liberation Mono', monospace;transform:scale(0.94,1.08);">203.41</div><div class="t" style="right:1769.52px;transform-origin:61.53px 16px;top:911px;font-size:21px;color:#252525;font-weight:normal;font-family:'Liberation Mono', monospace;transform:scale(0.94,1.08);">30.22</div><div class="t" style="right:1623.91px;transform-origin:48.72px 16px;top:911px;font-size:21px;color:#252525;font-weight:normal;font-family:'Liberation Mono', monospace;transform:scale(0.94,1.08);">5.97</div><div class="t" style="right:1479.13px;transform-origin:74.34px 16px;top:911px;font-size:21px;color:#252525;font-weight:normal;font-family:'Liberation Mono', monospace;transform:scale(0.94,1.08);">567.00</div><div class="t" style="right:1284.39px;transform-origin:75.6px 16px;top:911px;font-size:21px;color:#252525;font-weight:normal;font-family:'Liberation Mono', monospace;transform:scale(0.985,1.08);">24.67%</div><div class="t" style="right:1076.79px;transform-origin:75.6px 16px;top:911px;font-size:21px;color:#252525;font-weight:normal;font-family:'Liberation Mono', monospace;transform:scale(0.985,1.08);">28.29%</div><div class="t" style="right:840.29px;transform-origin:75.6px 16px;top:911px;font-size:21px;color:#252525;font-weight:normal;font-family:'Liberation Mono', monospace;transform:scale(0.985,1.08);">10.55%</div><div style="position:absolute;left:1485px;top:907.5px;width:100.359px;height:24.5px;background:#3a7d23"></div><div class="t" style="left:1596.49px;transform-origin:1.36px 16px;top:911px;font-size:21px;color:#1b4a7e;font-weight:normal;font-family:'Liberation Mono', monospace;transform:scale(1.04,1.08);">8.85%</div><div class="t" style="left:85.2px;transform-origin:0.0px 18px;top:942px;font-size:21px;color:#252423;font-weight:normal;font-family:'Liberation Sans', sans-serif;">Appliances</div><div class="t" style="right:1914.83px;transform-origin:74.24px 16px;top:944px;font-size:21px;color:#252525;font-weight:normal;font-family:'Liberation Mono', monospace;transform:scale(0.94,1.08);">107.53</div><div class="t" style="right:1769.94px;transform-origin:61.95px 16px;top:944px;font-size:21px;color:#252525;font-weight:normal;font-family:'Liberation Mono', monospace;transform:scale(0.94,1.08);">18.14</div><div class="t" style="right:1624.23px;transform-origin:49.04px 16px;top:944px;font-size:21px;color:#252525;font-weight:normal;font-family:'Liberation Mono', monospace;transform:scale(0.94,1.08);">1.73</div><div class="t" style="right:1479.13px;transform-origin:61.74px 16px;top:944px;font-size:21px;color:#252525;font-weight:normal;font-family:'Liberation Mono', monospace;transform:scale(0.94,1.08);">77.60</div><div class="t" style="right:1284.39px;transform-origin:75.6px 16px;top:944px;font-size:21px;color:#252525;font-weight:normal;font-family:'Liberation Mono', monospace;transform:scale(0.985,1.08);">14.81%</div><div class="t" style="right:1076.79px;transform-origin:75.6px 16px;top:944px;font-size:21px;color:#252525;font-weight:normal;font-family:'Liberation Mono', monospace;transform:scale(0.985,1.08);">14.95%</div><div class="t" style="right:840.29px;transform-origin:63.0px 16px;top:944px;font-size:21px;color:#252525;font-weight:normal;font-family:'Liberation Mono', monospace;transform:scale(0.985,1.08);">6.33%</div><div style="position:absolute;left:1485px;top:940.5px;width:53.0712px;height:23.5px;background:#3a7d23"></div><div class="t" style="left:1549.52px;transform-origin:1.05px 16px;top:944px;font-size:21px;color:#1b4a7e;font-weight:normal;font-family:'Liberation Mono', monospace;transform:scale(1.04,1.08);">4.68%</div><div class="t" style="left:83.52px;transform-origin:1.68px 18px;top:974px;font-size:21px;color:#252423;font-weight:normal;font-family:'Liberation Sans', sans-serif;transform:scaleX(0.9672);">Paper</div><div class="t" style="right:1914.83px;transform-origin:61.64px 16px;top:976px;font-size:21px;color:#252525;font-weight:normal;font-family:'Liberation Mono', monospace;transform:scale(0.94,1.08);">78.48</div><div class="t" style="right:1769.63px;transform-origin:61.64px 16px;top:976px;font-size:21px;color:#252525;font-weight:normal;font-family:'Liberation Mono', monospace;transform:scale(0.94,1.08);">34.05</div><div class="t" style="right:1624.23px;transform-origin:49.04px 16px;top:976px;font-size:21px;color:#252525;font-weight:normal;font-family:'Liberation Mono', monospace;transform:scale(0.94,1.08);">5.18</div><div class="t" style="right:1479.13px;transform-origin:74.34px 16px;top:976px;font-size:21px;color:#252525;font-weight:normal;font-family:'Liberation Mono', monospace;transform:scale(0.94,1.08);">102.60</div><div class="t" style="right:1284.39px;transform-origin:75.6px 16px;top:976px;font-size:21px;color:#252525;font-weight:normal;font-family:'Liberation Mono', monospace;transform:scale(0.985,1.08);">27.80%</div><div class="t" style="right:1076.79px;transform-origin:75.6px 16px;top:976px;font-size:21px;color:#252525;font-weight:normal;font-family:'Liberation Mono', monospace;transform:scale(0.985,1.08);">10.91%</div><div class="t" style="right:840.29px;transform-origin:75.6px 16px;top:976px;font-size:21px;color:#252525;font-weight:normal;font-family:'Liberation Mono', monospace;transform:scale(0.985,1.08);">11.89%</div><div style="position:absolute;left:1485px;top:972.5px;width:38.7828px;height:24.5px;background:#3a7d23"></div><div class="t" style="left:1534.92px;transform-origin:1.36px 16px;top:976px;font-size:21px;color:#1b4a7e;font-weight:normal;font-family:'Liberation Mono', monospace;transform:scale(1.04,1.08);">3.42%</div><div class="t" style="left:84.26px;transform-origin:0.94px 18px;top:1007px;font-size:21px;color:#252423;font-weight:normal;font-family:'Liberation Sans', sans-serif;transform:scaleX(0.9854);">Supplies</div><div class="t" style="right:1914.51px;transform-origin:61.32px 16px;top:1009px;font-size:21px;color:#252525;font-weight:normal;font-family:'Liberation Mono', monospace;transform:scale(0.94,1.08);">46.67</div><div class="t" style="right:1769.52px;transform-origin:61.53px 16px;top:1009px;font-size:21px;color:#252525;font-weight:normal;font-family:'Liberation Mono', monospace;transform:scale(0.94,1.08);">-1.19</div><div class="t" style="right:1624.23px;transform-origin:49.04px 16px;top:1009px;font-size:21px;color:#252525;font-weight:normal;font-family:'Liberation Mono', monospace;transform:scale(0.94,1.08);">0.65</div><div class="t" style="right:1479.13px;transform-origin:61.74px 16px;top:1009px;font-size:21px;color:#252525;font-weight:normal;font-family:'Liberation Mono', monospace;transform:scale(0.94,1.08);">14.60</div><div class="t" style="right:1284.39px;transform-origin:75.6px 16px;top:1009px;font-size:21px;color:#252525;font-weight:normal;font-family:'Liberation Mono', monospace;transform:scale(0.985,1.08);">-0.97%</div><div class="t" style="right:1076.79px;transform-origin:63.0px 16px;top:1009px;font-size:21px;color:#252525;font-weight:normal;font-family:'Liberation Mono', monospace;transform:scale(0.985,1.08);">6.49%</div><div class="t" style="right:840.29px;transform-origin:75.6px 16px;top:1009px;font-size:21px;color:#252525;font-weight:normal;font-family:'Liberation Mono', monospace;transform:scale(0.985,1.08);">-0.42%</div><div style="position:absolute;left:1485px;top:1005.5px;width:23.0202px;height:24.5px;background:#3a7d23"></div><div class="t" style="left:1519.05px;transform-origin:1.47px 16px;top:1009px;font-size:21px;color:#1b4a7e;font-weight:normal;font-family:'Liberation Mono', monospace;transform:scale(1.04,1.08);">2.03%</div><div class="t" style="left:85.2px;transform-origin:0.0px 18px;top:1040px;font-size:21px;color:#252423;font-weight:normal;font-family:'Liberation Sans', sans-serif;transform:scaleX(1.0574);">Art</div><div class="t" style="right:1914.72px;transform-origin:61.53px 16px;top:1042px;font-size:21px;color:#252525;font-weight:normal;font-family:'Liberation Mono', monospace;transform:scale(0.94,1.08);">27.12</div><div class="t" style="right:1769.63px;transform-origin:49.04px 16px;top:1042px;font-size:21px;color:#252525;font-weight:normal;font-family:'Liberation Mono', monospace;transform:scale(0.94,1.08);">6.53</div><div class="t" style="right:1624.33px;transform-origin:49.14px 16px;top:1042px;font-size:21px;color:#252525;font-weight:normal;font-family:'Liberation Mono', monospace;transform:scale(0.94,1.08);">3.00</div><div class="t" style="right:1479.13px;transform-origin:61.74px 16px;top:1042px;font-size:21px;color:#252525;font-weight:normal;font-family:'Liberation Mono', monospace;transform:scale(0.94,1.08);">59.60</div><div class="t" style="right:1284.39px;transform-origin:63.0px 16px;top:1042px;font-size:21px;color:#252525;font-weight:normal;font-family:'Liberation Mono', monospace;transform:scale(0.985,1.08);">5.33%</div><div class="t" style="right:1076.79px;transform-origin:63.0px 16px;top:1042px;font-size:21px;color:#252525;font-weight:normal;font-family:'Liberation Mono', monospace;transform:scale(0.985,1.08);">3.77%</div><div class="t" style="right:840.29px;transform-origin:63.0px 16px;top:1042px;font-size:21px;color:#252525;font-weight:normal;font-family:'Liberation Mono', monospace;transform:scale(0.985,1.08);">2.28%</div><div style="position:absolute;left:1485px;top:1038.5px;width:13.3812px;height:24.0px;background:#3a7d23"></div><div class="t" style="left:1509.41px;transform-origin:1.47px 16px;top:1042px;font-size:21px;color:#1b4a7e;font-weight:normal;font-family:'Liberation Mono', monospace;transform:scale(1.04,1.08);">1.18%</div><div class="t" style="left:83.52px;transform-origin:1.68px 18px;top:1072px;font-size:21px;color:#252423;font-weight:normal;font-family:'Liberation Sans', sans-serif;transform:scaleX(0.9869);">Envelopes</div><div class="t" style="right:1914.83px;transform-origin:61.64px 16px;top:1074px;font-size:21px;color:#252525;font-weight:normal;font-family:'Liberation Mono', monospace;transform:scale(0.94,1.08);">16.48</div><div class="t" style="right:1769.63px;transform-origin:49.04px 16px;top:1074px;font-size:21px;color:#252525;font-weight:normal;font-family:'Liberation Mono', monospace;transform:scale(0.94,1.08);">6.96</div><div class="t" style="right:1624.54px;transform-origin:49.35px 16px;top:1074px;font-size:21px;color:#252525;font-weight:normal;font-family:'Liberation Mono', monospace;transform:scale(0.94,1.08);">0.91</div><div class="t" style="right:1479.13px;transform-origin:61.74px 16px;top:1074px;font-size:21px;color:#252525;font-weight:normal;font-family:'Liberation Mono', monospace;transform:scale(0.94,1.08);">20.40</div><div class="t" style="right:1284.39px;transform-origin:63.0px 16px;top:1074px;font-size:21px;color:#252525;font-weight:normal;font-family:'Liberation Mono', monospace;transform:scale(0.985,1.08);">5.69%</div><div class="t" style="right:1076.79px;transform-origin:63.0px 16px;top:1074px;font-size:21px;color:#252525;font-weight:normal;font-family:'Liberation Mono', monospace;transform:scale(0.985,1.08);">2.29%</div><div class="t" style="right:840.29px;transform-origin:63.0px 16px;top:1074px;font-size:21px;color:#252525;font-weight:normal;font-family:'Liberation Mono', monospace;transform:scale(0.985,1.08);">2.43%</div><div style="position:absolute;left:1485px;top:1071.0px;width:8.1648px;height:24.0px;background:#3a7d23"></div><div class="t" style="left:1504.4px;transform-origin:1.26px 16px;top:1074px;font-size:21px;color:#1b4a7e;font-weight:normal;font-family:'Liberation Mono', monospace;transform:scale(1.04,1.08);">0.72%</div><div class="t" style="left:83.52px;transform-origin:1.68px 18px;top:1105px;font-size:21px;color:#252423;font-weight:normal;font-family:'Liberation Sans', sans-serif;transform:scaleX(0.9894);">Labels</div><div class="t" style="right:1914.72px;transform-origin:61.53px 16px;top:1107px;font-size:21px;color:#252525;font-weight:normal;font-family:'Liberation Mono', monospace;transform:scale(0.94,1.08);">12.49</div><div class="t" style="right:1769.63px;transform-origin:49.04px 16px;top:1107px;font-size:21px;color:#252525;font-weight:normal;font-family:'Liberation Mono', monospace;transform:scale(0.94,1.08);">5.55</div><div class="t" style="right:1624.33px;transform-origin:49.14px 16px;top:1107px;font-size:21px;color:#252525;font-weight:normal;font-family:'Liberation Mono', monospace;transform:scale(0.94,1.08);">1.40</div><div class="t" style="right:1479.13px;transform-origin:61.74px 16px;top:1107px;font-size:21px;color:#252525;font-weight:normal;font-family:'Liberation Mono', monospace;transform:scale(0.94,1.08);">25.00</div><div class="t" style="right:1284.39px;transform-origin:63.0px 16px;top:1107px;font-size:21px;color:#252525;font-weight:normal;font-family:'Liberation Mono', monospace;transform:scale(0.985,1.08);">4.53%</div><div class="t" style="right:1076.79px;transform-origin:63.0px 16px;top:1107px;font-size:21px;color:#252525;font-weight:normal;font-family:'Liberation Mono', monospace;transform:scale(0.985,1.08);">1.74%</div><div class="t" style="right:840.29px;transform-origin:63.0px 16px;top:1107px;font-size:21px;color:#252525;font-weight:normal;font-family:'Liberation Mono', monospace;transform:scale(0.985,1.08);">1.94%</div><div style="position:absolute;left:1485px;top:1103.5px;width:6.123600000000001px;height:24.5px;background:#3a7d23"></div><div class="t" style="left:1502.36px;transform-origin:1.26px 16px;top:1107px;font-size:21px;color:#1b4a7e;font-weight:normal;font-family:'Liberation Mono', monospace;transform:scale(1.04,1.08);">0.54%</div><div class="t" style="left:83.52px;transform-origin:1.68px 18px;top:1137px;font-size:21px;color:#252423;font-weight:normal;font-family:'Liberation Sans', sans-serif;transform:scaleX(0.9623);">Fasteners</div><div class="t" style="right:1914.72px;transform-origin:48.93px 16px;top:1139px;font-size:21px;color:#252525;font-weight:normal;font-family:'Liberation Mono', monospace;transform:scale(0.94,1.08);">3.02</div><div class="t" style="right:1769.63px;transform-origin:49.04px 16px;top:1139px;font-size:21px;color:#252525;font-weight:normal;font-family:'Liberation Mono', monospace;transform:scale(0.94,1.08);">0.95</div><div class="t" style="right:1624.54px;transform-origin:49.35px 16px;top:1139px;font-size:21px;color:#252525;font-weight:normal;font-family:'Liberation Mono', monospace;transform:scale(0.94,1.08);">0.91</div><div class="t" style="right:1479.13px;transform-origin:61.74px 16px;top:1139px;font-size:21px;color:#252525;font-weight:normal;font-family:'Liberation Mono', monospace;transform:scale(0.94,1.08);">17.80</div><div class="t" style="right:1284.39px;transform-origin:63.0px 16px;top:1139px;font-size:21px;color:#252525;font-weight:normal;font-family:'Liberation Mono', monospace;transform:scale(0.985,1.08);">0.78%</div><div class="t" style="right:1076.79px;transform-origin:63.0px 16px;top:1139px;font-size:21px;color:#252525;font-weight:normal;font-family:'Liberation Mono', monospace;transform:scale(0.985,1.08);">0.42%</div><div class="t" style="right:840.29px;transform-origin:63.0px 16px;top:1139px;font-size:21px;color:#252525;font-weight:normal;font-family:'Liberation Mono', monospace;transform:scale(0.985,1.08);">0.33%</div><div style="position:absolute;left:1485px;top:1136.5px;width:1.4742px;height:22.5px;background:#3a7d23"></div><div class="t" style="left:1497.71px;transform-origin:1.26px 16px;top:1139px;font-size:21px;color:#1b4a7e;font-weight:normal;font-family:'Liberation Mono', monospace;transform:scale(1.04,1.08);">0.13%</div><div style="position:absolute;left:1484px;top:505px;width:2px;height:658px;background:#252525"></div><div style="position:absolute;left:1483px;top:426px;width:361px;height:394px;background:#fff;box-shadow:0 3px 9px rgba(0,0,0,.22),0 0 2px rgba(0,0,0,.12)"></div><div style="position:absolute;left:1663px;top:426px;width:181px;height:43px;background:#f3f3f3"></div><div style="position:absolute;left:1483px;top:465.5px;width:180px;height:3.7px;background:#0f6cbd"></div><div style="position:absolute;left:1483px;top:773.3px;width:361px;height:1.3px;background:#e1e1e1"></div><div style="position:absolute;left:1488.4px;top:597.6px;width:242.8px;height:48.6px;border:2.2px solid #dd1f26;border-radius:4px;box-sizing:border-box;box-shadow:inset 0 0 7px rgba(0,0,0,.13),0 0 5px rgba(0,0,0,.10)"></div><div class="t" style="left:1548.22px;transform-origin:0.78px 14px;top:482px;font-size:17.4px;color:#444444;font-weight:normal;font-family:'Liberation Sans', sans-serif;">Sort</div><div class="t" style="left:1547.43px;transform-origin:1.57px 14px;top:525px;font-size:17.4px;color:#444444;font-weight:normal;font-family:'Liberation Sans', sans-serif;transform:scaleX(0.9678);">Insert</div><div class="t" style="left:1547.61px;transform-origin:1.39px 14px;top:569px;font-size:17.4px;color:#444444;font-weight:normal;font-family:'Liberation Sans', sans-serif;transform:scaleX(1.0168);">Pin Column</div><div class="t" style="left:1547.62px;transform-origin:0.78px 14px;top:613px;font-size:17.4px;color:#444444;font-weight:normal;font-family:'Liberation Sans', sans-serif;transform:scaleX(0.9902);">Stick Measure to Last</div><div class="t" style="left:1547.61px;transform-origin:1.39px 14px;top:656px;font-size:17.4px;color:#444444;font-weight:normal;font-family:'Liberation Sans', sans-serif;transform:scaleX(1.0219);">Hide Column</div><div class="t" style="left:1547.61px;transform-origin:1.39px 14px;top:699px;font-size:17.4px;color:#444444;font-weight:normal;font-family:'Liberation Sans', sans-serif;transform:scaleX(0.9949);">Edit Measure</div><div class="t" style="left:1547.61px;transform-origin:1.39px 14px;top:742px;font-size:17.4px;color:#444444;font-weight:normal;font-family:'Liberation Sans', sans-serif;transform:scaleX(1.0127);">Delete Measure</div><div class="t" style="left:1548.22px;transform-origin:0.78px 14px;top:788px;font-size:17.4px;color:#444444;font-weight:normal;font-family:'Liberation Sans', sans-serif;transform:scaleX(0.9882);">Select Header</div><svg style="position:absolute;left:0;top:0;overflow:visible" width="2304" height="1305" viewBox="0 0 2304 1305"><path d="M1562.8,440 L1582.1,440 M1562.8,448.3 L1582.1,448.3 M1562.8,456.6 L1582.1,456.6" fill="none" stroke="#333" stroke-width="1.5" /><path d="M1741.8,440.3 L1763.2,440.3 L1755.2,450.5 L1755.2,458.2 L1750.4,458.2 L1750.4,450.5 Z" fill="none" stroke="#444" stroke-width="1.3" /><path d="M1513.8,503 L1513.8,478.5 M1510,482.5 L1513.8,478.3 L1517.6,482.5" fill="none" stroke="#444" stroke-width="1.5" /><path d="M1524.4,478.6 L1524.4,504 M1520.6,500 L1524.4,504.2 L1528.2,500" fill="none" stroke="#1a5aa8" stroke-width="1.5" /><polyline points="1809.5,479.3 1820,489.9 1809.5,500.5" fill="none" stroke="#444" stroke-width="1.3"/><polyline points="1809.5,522.5 1820,533.1 1809.5,543.7" fill="none" stroke="#444" stroke-width="1.3"/><path d="M1508.3,535.2 L1532.1,535.2 M1520.2,523.4 L1520.2,546.9" fill="none" stroke="#1a5aa8" stroke-width="1.5" /><path d="M1521.2,564.3 L1532.5,575.6 L1528.8,577.3 L1522.9,583.5 L1522.8,588.3 L1520.7,589.5 L1509.3,578.1 L1510.5,576 L1515.3,575.9 L1521.5,570 Z" fill="none" stroke="#1a5aa8" stroke-width="1.4" /><line x1="1513.5" y1="584.1" x2="1505.5" y2="592" stroke="#1a5aa8" stroke-width="1.5" stroke-linecap="butt"/><path d="M1504.8,619.4 L1529.6,619.4 M1519.5,611.1 L1528,619.4 L1519.5,627.7" fill="none" stroke="#1a5aa8" stroke-width="1.5" /><line x1="1532.8" y1="609.3" x2="1532.8" y2="633.2" stroke="#111" stroke-width="2.2" stroke-linecap="butt"/><path d="M1504,669 Q1519.5,648 1535,669" fill="none" stroke="#333" stroke-width="1.3" /><line x1="1507.6" y1="654.4" x2="1528.2" y2="675" stroke="#333" stroke-width="1.3" stroke-linecap="butt"/><circle cx="1519.5" cy="669.4" r="3.2" fill="#fff" stroke="#1a5aa8" stroke-width="1.4"/><line x1="1516" y1="666" x2="1528.2" y2="675" stroke="#333" stroke-width="1.3" stroke-linecap="butt"/><path d="M1509,693.2 L1535.5,693.2 L1535.5,716.9 L1531,716.9 M1503.7,699 L1503.7,716.9 L1513,716.9" fill="none" stroke="#333" stroke-width="1.3" /><path d="M1503.7,699 L1503.7,693.2 L1509,693.2" fill="none" stroke="#333" stroke-width="1.3" /><rect x="1514" y="700.5" width="16" height="23.5" fill="#fff" stroke="#333" stroke-width="1.3" /><rect x="1516.8" y="704" width="10.4" height="3.8" fill="#6fa8e0" stroke="#1a5aa8" stroke-width="1.1" /><rect x="1517.5" y="711" width="1.6" height="1.6" fill="#666" stroke="none" stroke-width="0" /><rect x="1521.5" y="711" width="1.6" height="1.6" fill="#666" stroke="none" stroke-width="0" /><rect x="1525.5" y="711" width="1.6" height="1.6" fill="#666" stroke="none" stroke-width="0" /><rect x="1517.5" y="715" width="1.6" height="1.6" fill="#666" stroke="none" stroke-width="0" /><rect x="1521.5" y="715" width="1.6" height="1.6" fill="#666" stroke="none" stroke-width="0" /><rect x="1525.5" y="715" width="1.6" height="1.6" fill="#666" stroke="none" stroke-width="0" /><rect x="1517.5" y="719.5" width="1.6" height="1.6" fill="#666" stroke="none" stroke-width="0" /><rect x="1521.5" y="719.5" width="1.6" height="1.6" fill="#666" stroke="none" stroke-width="0" /><rect x="1525.5" y="719.5" width="1.6" height="1.6" fill="#666" stroke="none" stroke-width="0" /><rect x="1504" y="736.5" width="31.3" height="31" fill="none" stroke="#333" stroke-width="1.4" /><path d="M1510.3,742.6 L1528.7,761 M1528.7,742.6 L1510.3,761" fill="none" stroke="#1a4f9c" stroke-width="2.3" /><rect x="1505.8" y="787.3" width="27.6" height="10" fill="#6fa8e0" stroke="none" stroke-width="0" /><rect x="1505.4" y="787.1" width="28.3" height="22.1" fill="none" stroke="#333" stroke-width="1.4" /><line x1="1505.4" y1="797.4" x2="1533.7" y2="797.4" stroke="#333" stroke-width="1.3" stroke-linecap="butt"/><line x1="1519.5" y1="787.1" x2="1519.5" y2="797.4" stroke="#333" stroke-width="1.3" stroke-linecap="butt"/></svg><div style="position:absolute;left:16px;top:1194px;width:25px;height:34px;background:#f1f1f1;box-shadow:0 2px 3px rgba(0,0,0,.18)"></div><div style="position:absolute;left:24.0px;top:1203.5px;width:2.6px;height:2.6px;background:#222"></div><div style="position:absolute;left:24.0px;top:1209.1000000000001px;width:2.6px;height:2.6px;background:#222"></div><div style="position:absolute;left:24.0px;top:1214.7px;width:2.6px;height:2.6px;background:#222"></div><div style="position:absolute;left:29.7px;top:1203.5px;width:2.6px;height:2.6px;background:#222"></div><div style="position:absolute;left:29.7px;top:1209.1000000000001px;width:2.6px;height:2.6px;background:#222"></div><div style="position:absolute;left:29.7px;top:1214.7px;width:2.6px;height:2.6px;background:#222"></div><div style="position:absolute;left:10px;top:1247.5px;width:2286px;height:1.5px;background:#e3e3e3"></div><div class="t" style="left:10.58px;transform-origin:0.42px 18px;top:1260px;font-size:21px;color:#252423;font-weight:normal;font-family:'Liberation Sans', sans-serif;transform:scaleX(1.0218);">Total rows: 21</div><div class="t" style="left:1961.15px;transform-origin:1.05px 18px;top:1262px;font-size:21px;color:#252423;font-weight:normal;font-family:'Liberation Sans', sans-serif;transform:scaleX(1.0109);">21 records</div><div class="t" style="left:2132.32px;transform-origin:1.68px 18px;top:1262px;font-size:21px;color:#252423;font-weight:normal;font-family:'Liberation Sans', sans-serif;transform:scaleX(1.0154);">Page 1 of 1</div><div style="position:absolute;left:1783.5px;top:1258.5px;width:98.5px;height:35.5px;border:1.5px solid #c8c8c8;box-sizing:border-box;background:#fff"></div><div class="t" style="left:1804.0px;transform-origin:1.5px 17px;top:1265px;font-size:20px;color:#252423;font-weight:normal;font-family:'Liberation Sans', sans-serif;transform:scaleX(1.0092);">100 %</div><svg style="position:absolute;left:0;top:0;overflow:visible" width="2304" height="1305" viewBox="0 0 2304 1305"><polygon points="1712.33,1258.80 1717.07,1258.80 1717.43,1262.36 1720.02,1263.43 1722.78,1261.17 1726.13,1264.52 1723.87,1267.28 1724.94,1269.87 1728.50,1270.23 1728.50,1274.97 1724.94,1275.33 1723.87,1277.92 1726.13,1280.68 1722.78,1284.03 1720.02,1281.77 1717.43,1282.84 1717.07,1286.40 1712.33,1286.40 1711.97,1282.84 1709.38,1281.77 1706.62,1284.03 1703.27,1280.68 1705.53,1277.92 1704.46,1275.33 1700.90,1274.97 1700.90,1270.23 1704.46,1269.87 1705.53,1267.28 1703.27,1264.52 1706.62,1261.17 1709.38,1263.43 1711.97,1262.36" fill="none" stroke="#3a3a3a" stroke-width="1.4" stroke-linejoin="round"/><circle cx="1714.7" cy="1272.6" r="5.5" fill="none" stroke="#1a5aa8" stroke-width="1.4"/><line x1="1749.3" y1="1274" x2="1767.8" y2="1274" stroke="#333" stroke-width="1.6" stroke-linecap="butt"/><path d="M1892.7,1274.8 L1912.6,1274.8 M1902.6,1264.8 L1902.6,1284.8" fill="none" stroke="#333" stroke-width="1.8" /><path d="M2083.5,1264 L2083.5,1281 M2100.5,1264 L2092,1272.5 L2100.5,1281" fill="none" stroke="#9c9c9c" stroke-width="2.4" /><path d="M2123,1264 L2114.5,1272.5 L2123,1281" fill="none" stroke="#9c9c9c" stroke-width="2.4" /><path d="M2252.5,1264 L2261,1272.5 L2252.5,1281" fill="none" stroke="#9c9c9c" stroke-width="2.4" /><path d="M2275,1264 L2283.5,1272.5 L2275,1281 M2290.7,1264 L2290.7,1281" fill="none" stroke="#9c9c9c" stroke-width="2.4" /></svg>
</body></html>
